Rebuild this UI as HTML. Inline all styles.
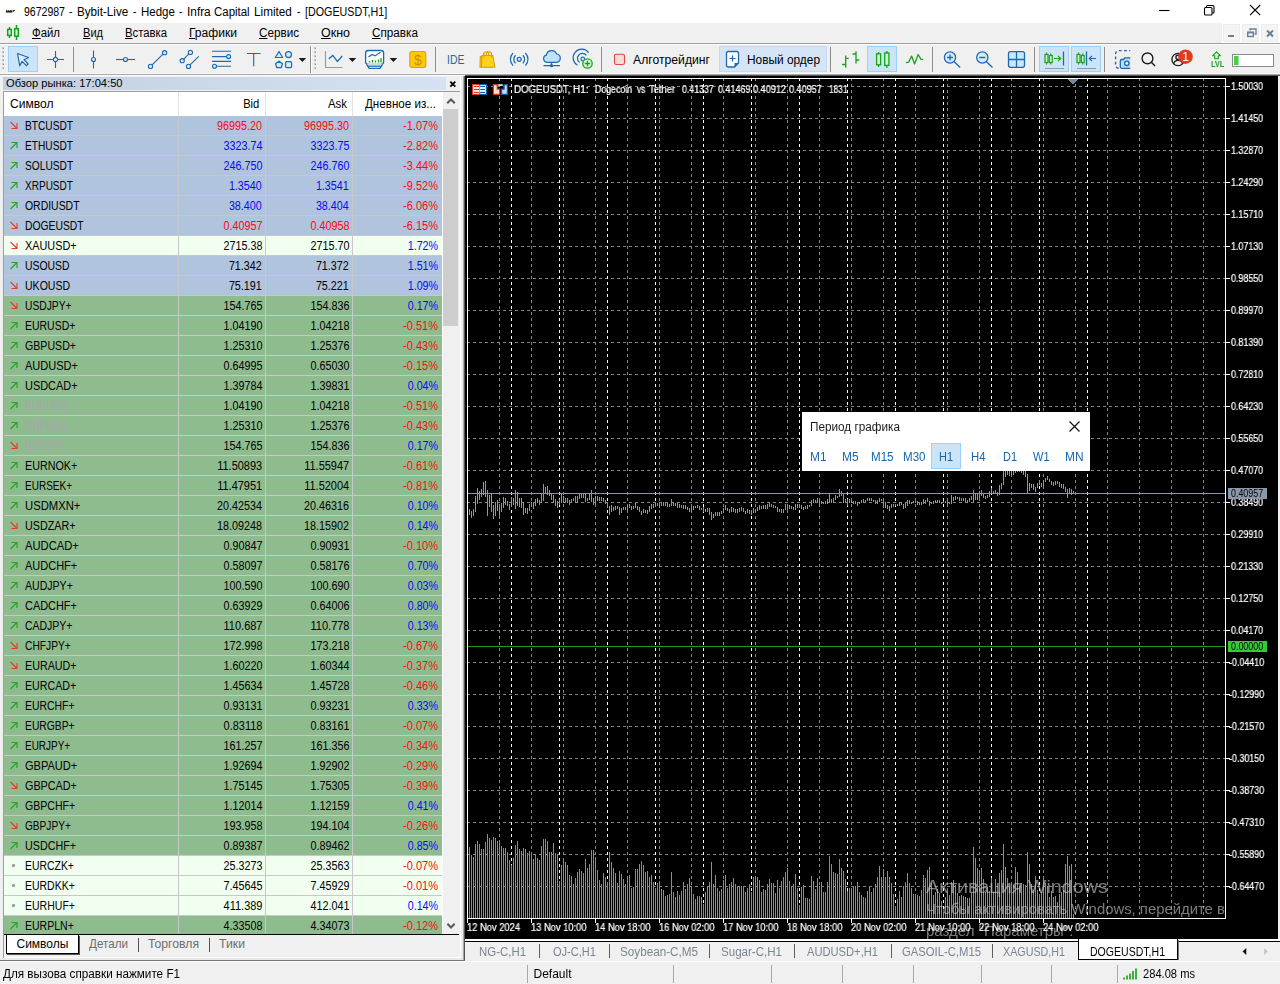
<!DOCTYPE html>
<html lang="ru"><head><meta charset="utf-8"><title>9672987 - Bybit-Live - Hedge - Infra Capital Limited - [DOGEUSDT,H1]</title>
<style>
html,body{margin:0;padding:0;}
body{width:1280px;height:984px;position:relative;overflow:hidden;background:#f0f0f0;font-family:"Liberation Sans",sans-serif;}
.t{position:absolute;white-space:pre;display:block;}
.b{position:absolute;}
svg{position:absolute;overflow:visible;}
u{text-decoration:underline;text-underline-offset:1px;text-decoration-thickness:1px;}
</style></head><body>
<div class="b" style="left:0px;top:0px;width:1280px;height:23px;background:#fff;"></div>
<svg style="left:0;top:0" width="30" height="23"><path d="M6 12.600v-2.300h1.300v1.200l1-1.200h1v1.200l1-1.200h1.600v1.200h.9l.6-1.400h1.400v.9h-1v.7h-1.100l-.5.900z" fill="#111"/><circle cx="12.300" cy="10.300" r=".8" fill="#f7a600"/></svg>
<span class="t" style="left:23.5px;top:4px;font-size:12px;line-height:16px;color:#000;transform-origin:0 50%;transform:scaleX(0.876);">9672987</span>
<span class="t" style="left:68.5px;top:4px;font-size:12px;line-height:16px;color:#000;transform-origin:0 50%;transform:scaleX(0.851);">-</span>
<span class="t" style="left:76.9px;top:4px;font-size:12px;line-height:16px;color:#000;transform-origin:0 50%;transform:scaleX(0.972);">Bybit-Live</span>
<span class="t" style="left:133.1px;top:4px;font-size:12px;line-height:16px;color:#000;transform-origin:0 50%;transform:scaleX(0.851);">-</span>
<span class="t" style="left:140.6px;top:4px;font-size:12px;line-height:16px;color:#000;transform-origin:0 50%;transform:scaleX(0.956);">Hedge</span>
<span class="t" style="left:178.5px;top:4px;font-size:12px;line-height:16px;color:#000;transform-origin:0 50%;transform:scaleX(0.851);">-</span>
<span class="t" style="left:186.9px;top:4px;font-size:12px;line-height:16px;color:#000;transform-origin:0 50%;transform:scaleX(0.987);">Infra</span>
<span class="t" style="left:213.75px;top:4px;font-size:12px;line-height:16px;color:#000;transform-origin:0 50%;transform:scaleX(0.954);">Capital</span>
<span class="t" style="left:254px;top:4px;font-size:12px;line-height:16px;color:#000;transform-origin:0 50%;transform:scaleX(0.980);">Limited</span>
<span class="t" style="left:296.9px;top:4px;font-size:12px;line-height:16px;color:#000;transform-origin:0 50%;transform:scaleX(0.838);">-</span>
<span class="t" style="left:305.2px;top:4px;font-size:12px;line-height:16px;color:#000;transform-origin:0 50%;transform:scaleX(0.893);">[DOGEUSDT,H1]</span>
<svg style="left:0;top:0" width="1280" height="23" fill="none" stroke="#000" stroke-width="1.1"><path d="M1159 10.5h10.5"/><rect x="1204.5" y="7.5" width="7.5" height="7.5" rx="1"/><path d="M1206.5 7.5v-1a1 1 0 0 1 1-1h5.5a1 1 0 0 1 1 1v5.5a1 1 0 0 1-1 1h-1"/><path d="M1250 5l10.2 10.2M1260.2 5l-10.2 10.2"/></svg>
<div class="b" style="left:0px;top:23px;width:1280px;height:20px;background:#f0f0f0;"></div>
<div class="b" style="left:0px;top:43px;width:1280px;height:1px;background:#a0a0a0;"></div>
<div class="b" style="left:0px;top:44px;width:1280px;height:1px;background:#fbfbfb;"></div>
<svg style="left:0;top:23px" width="24" height="20" fill="#e0fae0" stroke="#10a31a" stroke-width="1.500"><path d="M9.500 4v11M16.500 2v15" fill="none"/><rect x="7.700" y="6.400" width="3.600" height="6"/><rect x="14.700" y="5.700" width="3.600" height="7.500"/></svg>
<span class="t" style="left:32px;top:25px;font-size:12px;line-height:16px;color:#000;transform-origin:0 50%;transform:scaleX(0.949);"><u>Ф</u>айл</span>
<span class="t" style="left:83px;top:25px;font-size:12px;line-height:16px;color:#000;transform-origin:0 50%;transform:scaleX(0.921);"><u>В</u>ид</span>
<span class="t" style="left:125px;top:25px;font-size:12px;line-height:16px;color:#000;transform-origin:0 50%;transform:scaleX(0.942);"><u>В</u>ставка</span>
<span class="t" style="left:189px;top:25px;font-size:12px;line-height:16px;color:#000;transform-origin:0 50%;transform:scaleX(1.006);"><u>Г</u>рафики</span>
<span class="t" style="left:259px;top:25px;font-size:12px;line-height:16px;color:#000;transform-origin:0 50%;transform:scaleX(0.973);"><u>С</u>ервис</span>
<span class="t" style="left:321px;top:25px;font-size:12px;line-height:16px;color:#000;transform-origin:0 50%;transform:scaleX(1.040);"><u>О</u>кно</span>
<span class="t" style="left:372px;top:25px;font-size:12px;line-height:16px;color:#000;transform-origin:0 50%;transform:scaleX(0.977);"><u>С</u>правка</span>
<div class="b" style="left:1222px;top:23px;width:58px;height:20px;background:#fff;"></div>
<div class="b" style="left:1223px;top:24px;width:17px;height:18px;background:#f4f4f4;border:1px solid #ececec;box-sizing:border-box;"></div>
<div class="b" style="left:1242px;top:24px;width:17px;height:18px;background:#f4f4f4;border:1px solid #ececec;box-sizing:border-box;"></div>
<div class="b" style="left:1261px;top:24px;width:17px;height:18px;background:#f4f4f4;border:1px solid #ececec;box-sizing:border-box;"></div>
<svg style="left:0;top:0" width="1280" height="44" fill="none" stroke="#6b7f97"><path d="M1228 36h6" stroke-width="2"/><path d="M1250 30.5v-1.5h6v5h-1.5" stroke-width="1.4"/><rect x="1247.7" y="32.2" width="5.6" height="4.3" stroke-width="1.4"/><path d="M1247.7 32.6h5.6" stroke-width="1.6"/><path d="M1267 30.5l6 6M1273 30.5l-6 6" stroke-width="2"/></svg>
<div class="b" style="left:0px;top:45px;width:1280px;height:29px;background:#f0f0f0;"></div>
<div class="b" style="left:0px;top:73px;width:1280px;height:1px;background:#f8f8f8;"></div>
<div class="b" style="left:0px;top:74px;width:1280px;height:1px;background:#a9a9a9;"></div>
<div class="b" style="left:0px;top:75px;width:465px;height:1px;background:#fbfbfb;"></div>
<div class="b" style="left:465px;top:75px;width:815px;height:1px;background:#555;"></div>
<svg style="left:0;top:0" width="1280" height="76"><rect x="2" y="47" width="2" height="2" fill="#c4c4c4"/><rect x="3" y="48" width="1" height="1" fill="#9a9a9a"/><rect x="2" y="51" width="2" height="2" fill="#c4c4c4"/><rect x="3" y="52" width="1" height="1" fill="#9a9a9a"/><rect x="2" y="55" width="2" height="2" fill="#c4c4c4"/><rect x="3" y="56" width="1" height="1" fill="#9a9a9a"/><rect x="2" y="59" width="2" height="2" fill="#c4c4c4"/><rect x="3" y="60" width="1" height="1" fill="#9a9a9a"/><rect x="2" y="63" width="2" height="2" fill="#c4c4c4"/><rect x="3" y="64" width="1" height="1" fill="#9a9a9a"/><rect x="2" y="67" width="2" height="2" fill="#c4c4c4"/><rect x="3" y="68" width="1" height="1" fill="#9a9a9a"/><rect x="314" y="47" width="2" height="2" fill="#c4c4c4"/><rect x="315" y="48" width="1" height="1" fill="#9a9a9a"/><rect x="314" y="51" width="2" height="2" fill="#c4c4c4"/><rect x="315" y="52" width="1" height="1" fill="#9a9a9a"/><rect x="314" y="55" width="2" height="2" fill="#c4c4c4"/><rect x="315" y="56" width="1" height="1" fill="#9a9a9a"/><rect x="314" y="59" width="2" height="2" fill="#c4c4c4"/><rect x="315" y="60" width="1" height="1" fill="#9a9a9a"/><rect x="314" y="63" width="2" height="2" fill="#c4c4c4"/><rect x="315" y="64" width="1" height="1" fill="#9a9a9a"/><rect x="314" y="67" width="2" height="2" fill="#c4c4c4"/><rect x="315" y="68" width="1" height="1" fill="#9a9a9a"/><rect x="8.5" y="46.5" width="29" height="25" fill="#cce4f7" stroke="#99d1ff" stroke-width="1"/><path d="M17.5 53.5l11 4-4.6 2.2 4.2 4.3-1.8 1.7-4.2-4.3-2.3 4.4z" fill="#e3f0fb" stroke="#1b69ae" stroke-width="1.2" stroke-linejoin="round"/><g stroke="#1b69ae" stroke-width="1.1" fill="#f0f0f0"><path d="M55.5 51v17M47 59.5h17"/><circle cx="55.5" cy="59.5" r="2.1"/></g><rect x="73" y="47" width="1" height="25" fill="#8d8d8d"/><g stroke="#1b69ae" stroke-width="1.1" fill="#d9ecfb"><path d="M93.5 50.5v18"/><circle cx="93.5" cy="59.5" r="2"/></g><g stroke="#1b69ae" stroke-width="1.1" fill="#d9ecfb"><path d="M116 59.5h19"/><circle cx="125.5" cy="59.5" r="2"/></g><g stroke="#1b69ae" stroke-width="1.1" fill="#d9ecfb"><path d="M150.5 66.4L164.6 52.7"/><circle cx="150.5" cy="66.4" r="2.1"/><circle cx="164.6" cy="52.7" r="2.1"/></g><g stroke="#1b69ae" stroke-width="1.1" fill="#d9ecfb"><path d="M182.2 60.7L190.4 52.4M188.5 66.4L198.8 56.3"/><circle cx="182.2" cy="60.7" r="2.1"/><circle cx="190.4" cy="52.4" r="2.1"/><circle cx="188.5" cy="66.4" r="2.1"/></g><g stroke="#1b69ae" stroke-width="1.1" fill="#d9ecfb"><path d="M212 51.3h19M212 56.6h16M212 61.4h19M215 66.3h16"/><circle cx="228.6" cy="56.6" r="2"/><circle cx="214.5" cy="66.3" r="2"/></g><path d="M247 53.5h13.5M253.7 53.5v12.7" stroke="#1b69ae" stroke-width="1.15" fill="none"/><g stroke="#1b69ae" stroke-width="1.2" fill="#d9ecfb" stroke-linejoin="round"><path d="M279 51.5l3.7 6h-7.4z"/><circle cx="288.5" cy="54.6" r="3"/><path d="M279 61.2l3.5 2.6-1.3 3.9h-4.4l-1.3-3.9z"/><rect x="285.6" y="61.6" width="6" height="6" rx="1.2"/></g><path d="M298.6 58h7.6l-3.8 4z" fill="#1a1a1a"/><rect x="310" y="46" width="1" height="27" fill="#8d8d8d"/><rect x="311" y="46" width="1" height="27" fill="#fff"/><path d="M325.5 51v16.5h17" stroke="#9a9a9a" stroke-width="1.1" fill="none"/><path d="M328.8 58.8l4-3.4 4.6 6 4.8-5.4" stroke="#1b69ae" stroke-width="1.3" fill="none"/><path d="M348.6 58h7.6l-3.8 4z" fill="#1a1a1a"/><g stroke="#1b69ae" stroke-width="1.3" fill="#fff"><rect x="365.6" y="50.5" width="18" height="13.8" rx="2.5"/><path d="M366.600 64.300l2.600 4h10.800l2.600-4" /><path d="M367.800 66.200h13.600" fill="none"/></g><path d="M368.5 57l3.6-2.6 3 1.5 5.4-3.6" stroke="#1b69ae" stroke-width="1.2" fill="none"/><path d="M369.5 62.5v-1.5M372.5 62.5v-2.5M375.5 62.5v-2M378.5 62.5v-3M381 62.5v-4.5" stroke="#14a31a" stroke-width="1.3"/><path d="M389.6 58h7.6l-3.8 4z" fill="#1a1a1a"/><rect x="409.8" y="51.5" width="16" height="16" rx="2.2" fill="#ffc90a" stroke="#dba207" stroke-width="1.1"/><rect x="435" y="47" width="1" height="25" fill="#8d8d8d"/><g stroke="#dd9f0a" stroke-width="1.1"><path d="M480.300 56.500h10l1.600 10.700h-11.900z" fill="#f6c516"/><path d="M483.500 58.500v-4.200a2.600 2.600 0 0 1 5.200 0v4.200M486.300 55.500v-1.200a2.600 2.600 0 0 1 5.200 0v4.200" fill="none"/><path d="M482 55.500h10.800l2 11.700h-13.300z" fill="#ffd31c"/><path d="M484 58v-3.700a2.400 2.400 0 0 1 .5-1.500M491.500 58v-3.700" fill="none" stroke-width=".9"/></g><g stroke="#1b69ae" stroke-width="1.2" fill="none"><circle cx="519.2" cy="59.3" r="2" fill="#d9ecfb"/><path d="M515.6 55.2a5.6 5.6 0 0 0 0 8.2M522.8 55.2a5.6 5.6 0 0 1 0 8.2M513 53a9 9 0 0 0 0 12.6M525.4 53a9 9 0 0 1 0 12.6"/></g><g stroke="#1b69ae" stroke-width="1.2"><path d="M547 62.3a3.6 3.6 0 0 1-.6-7.1 5.3 5.3 0 0 1 10.2-1.2 4.2 4.2 0 0 1 .2 8.3z" fill="#bfe1fb"/><path d="M543.5 65.7h16.5M551.5 62.5v3" fill="none"/><circle cx="551.5" cy="65.7" r="1" fill="#1b69ae"/></g><g stroke="#1b69ae" stroke-width="1.2" fill="none"><circle cx="582.8" cy="59" r="1.8"/><path d="M586.4 55.3a5 5 0 1 0-6.8 7.2M588.6 52.6a8.6 8.6 0 1 0-11.2 12.6"/></g><circle cx="587.5" cy="63.5" r="4.7" fill="#d8f7d8" stroke="#14a31a" stroke-width="1.3"/><path d="M584.8 63.5h5.4M587.5 60.8v5.4" stroke="#14a31a" stroke-width="1.3"/><rect x="601" y="47" width="1" height="25" fill="#8d8d8d"/><rect x="614.5" y="54.3" width="10" height="10.2" rx="1.8" fill="#fddbd5" stroke="#e0474a" stroke-width="1.1"/><rect x="719.5" y="46.5" width="107" height="25" fill="#d5e5f5" stroke="#c3daf0" stroke-width="1"/><path d="M728.5 51.5h8a2 2 0 0 1 2 2v9.5l-4 4h-6a2 2 0 0 1-2-2v-11.500a2 2 0 0 1 2-2z" fill="#fff" stroke="#1b69ae" stroke-width="1.3"/><path d="M738.5 63l-4 4v-4z" fill="#1b69ae"/><path d="M729.5 58.500h6M732.5 55.500v6" stroke="#1b69ae" stroke-width="1.2"/><rect x="830" y="47" width="1" height="25" fill="#8d8d8d"/><path d="M845.7 55.400v12.400M842 64.500h3.700M845.700 58.300h3M856 51.300v12.200M852.500 54h3.500M856 60h3.200" stroke="#14a31a" stroke-width="1.3" fill="none"/><rect x="867.5" y="46.5" width="29" height="25" fill="#cce4f7" stroke="#99d1ff" stroke-width="1"/><g stroke="#14a31a" stroke-width="1.3" fill="#d3f5d3"><path d="M878.600 52v15M886.800 51v17" fill="none"/><rect x="876.600" y="53.800" width="4" height="11"/><rect x="884.700" y="53" width="4.200" height="12.400"/></g><path d="M906 62.700l2.800-.6 2.800-6 3 7.900 3.500-9.500 2.800 4.700 2.300.4" stroke="#14a31a" stroke-width="1.3" fill="none" stroke-linejoin="round"/><rect x="932" y="47" width="1" height="25" fill="#8d8d8d"/><g stroke="#1b69ae" stroke-width="1.3"><circle cx="950" cy="57.500" r="5.600" fill="#d9ecfb"/><path d="M954.200 61.700l6 5.800M947 57.500h6M950 54.500v6" fill="none"/></g><g stroke="#1b69ae" stroke-width="1.3"><circle cx="982.300" cy="57.500" r="5.600" fill="#d9ecfb"/><path d="M986.500 61.700l6 5.800M979.300 57.500h6" fill="none"/></g><g stroke="#1b69ae" stroke-width="1.3"><rect x="1008.500" y="51.700" width="16" height="15.600" rx="2" fill="#cfe7fb"/><path d="M1016.500 51.700v15.600M1008.500 59.500h16" fill="none"/></g><rect x="1034" y="47" width="1" height="25" fill="#8d8d8d"/><rect x="1039.5" y="46.5" width="29" height="25" fill="#cce4f7" stroke="#99d1ff" stroke-width="1"/><g stroke="#14a31a" stroke-width="1.2" fill="#d3f5d3"><path d="M1046.500 52.500v12" fill="none"/><rect x="1045" y="54.500" width="3" height="8"/><path d="M1050.800 53.500v11" fill="none"/><rect x="1049.400" y="55.500" width="2.800" height="7"/></g><path d="M1054 58.500h6.500M1058 55.800l2.700 2.700-2.700 2.700" stroke="#14a31a" stroke-width="1.2" fill="none"/><path d="M1063.500 51.500v14" stroke="#1b69ae" stroke-width="1.3"/><path d="M1045 68.500h19" stroke="#9a9a9a" stroke-width="1"/><rect x="1071.5" y="46.5" width="29" height="25" fill="#cce4f7" stroke="#99d1ff" stroke-width="1"/><g stroke="#14a31a" stroke-width="1.2" fill="#d3f5d3"><path d="M1078.500 52.500v12" fill="none"/><rect x="1077" y="54.500" width="3" height="8"/><path d="M1082.800 53.500v11" fill="none"/><rect x="1081.400" y="55.500" width="2.800" height="7"/></g><path d="M1086.500 51.500v14" stroke="#1b69ae" stroke-width="1.300"/><path d="M1089.500 58.500h6.500M1092 55.800l-2.700 2.700 2.700 2.700" stroke="#1b69ae" stroke-width="1.200" fill="none"/><path d="M1077 68.500h19" stroke="#9a9a9a" stroke-width="1"/><rect x="1104" y="47" width="1" height="25" fill="#8d8d8d"/><clipPath id="cpS"><rect x="1110" y="46" width="20.300" height="26"/></clipPath><g clip-path="url(#cpS)"><path d="M1132 50.600h-13.200a3.200 3.200 0 0 0-3.200 3.200v11.200a3.200 3.200 0 0 0 3.200 3.200h1" fill="none" stroke="#1b69ae" stroke-width="1.400" stroke-dasharray="2.800 2.400"/><path d="M1134 68.300h-12.200a1.500 1.500 0 0 1-1.500-1.500v-5.800a1.500 1.500 0 0 1 1.500-1.500h1.600l1.400-1.700h9.200z" fill="#b9dcf8" stroke="#1b69ae" stroke-width="1.300"/><circle cx="1126.800" cy="63.300" r="2.200" fill="#e8f4fd" stroke="#1b69ae" stroke-width="1.300"/></g><g stroke="#1a1a1a" stroke-width="1.400" fill="none"><circle cx="1147.500" cy="58.400" r="5.400"/><path d="M1151.300 62.200l3.800 3.800"/></g><g stroke="#1a1a1a" stroke-width="1.300" fill="none"><circle cx="1178.100" cy="59.500" r="6.200"/><circle cx="1178.100" cy="57.300" r="2.200"/><path d="M1173.600 64a4.600 4.600 0 0 1 9 0"/></g><circle cx="1185.500" cy="56.700" r="7.300" fill="#e13c22"/><path d="M1216.500 51.800l4 4h-2.200v3h-3.600v-3h-2.200z" fill="#d3f5d3" stroke="#14a31a" stroke-width="1.100" stroke-linejoin="round"/><rect x="1232.500" y="54.500" width="41" height="12" fill="#fff" stroke="#8a8a8a" stroke-width="1"/><rect x="1234" y="56" width="4.500" height="9" fill="#3fd33f"/></svg>
<span class="t" style="left:414px;top:50.5px;font-size:14px;line-height:18px;color:#c7920a;transform-origin:0 50%;">$</span>
<span class="t" style="left:446.7px;top:52px;font-size:12px;line-height:16px;color:#1b69ae;transform-origin:0 50%;transform:scaleX(0.865);">IDE</span>
<span class="t" style="left:633px;top:52px;font-size:12px;line-height:16px;color:#000;transform-origin:0 50%;transform:scaleX(1.016);">Алготрейдинг</span>
<span class="t" style="left:746.5px;top:52px;font-size:12px;line-height:16px;color:#000;transform-origin:0 50%;transform:scaleX(0.989);">Новый ордер</span>
<span class="t" style="left:1182.2px;top:49.5px;font-size:12px;line-height:15px;color:#fff;transform-origin:0 50%;">1</span>
<span class="t" style="left:1210.7px;top:59px;font-size:9px;line-height:11px;color:#14a31a;transform-origin:0 50%;transform:scaleX(0.815);font-weight:bold;will-change:transform;">LVL</span>
<div class="b" style="left:3px;top:77px;width:443px;height:13px;background:linear-gradient(90deg,#c3cfe1 0%,#ccd9ea 50%,#d4e2f3 100%);"></div>
<span class="t" style="left:5.5px;top:76px;font-size:11px;line-height:15px;color:#000;transform-origin:0 50%;transform:scaleX(1.013);">Обзор рынка: 17:04:50</span>
<svg style="left:446px;top:77px" width="14" height="14"><path d="M4.300 4.700l5 5M9.300 4.700l-5 5" stroke="#000" stroke-width="1.800" fill="none"/></svg>
<div class="b" style="left:3px;top:91px;width:457px;height:1px;background:#9c9c9c;"></div>
<div class="b" style="left:3px;top:91px;width:1px;height:867px;background:#9c9c9c;"></div>
<div class="b" style="left:460px;top:77px;width:1px;height:881px;background:#fdfdfd;"></div>
<div class="b" style="left:461px;top:76px;width:2px;height:884px;background:#ececec;"></div>
<div class="b" style="left:463px;top:76px;width:1px;height:885px;background:#a6a6a6;"></div>
<div class="b" style="left:464px;top:76px;width:1px;height:885px;background:#555555;"></div>
<div class="b" style="left:4px;top:92px;width:438px;height:24px;background:#fff;"></div>
<div class="b" style="left:178px;top:92px;width:1px;height:24px;background:#e5e5e5;"></div>
<div class="b" style="left:265px;top:92px;width:1px;height:24px;background:#e5e5e5;"></div>
<div class="b" style="left:352px;top:92px;width:1px;height:24px;background:#e5e5e5;"></div>
<span class="t" style="left:10.4px;top:96px;font-size:12px;line-height:16px;color:#000;transform-origin:0 50%;transform:scaleX(1.005);">Символ</span>
<span class="t" style="right:1020.3px;top:96px;font-size:12px;line-height:16px;color:#000;transform-origin:100% 50%;transform:scaleX(0.934);">Bid</span>
<span class="t" style="right:933.1px;top:96px;font-size:12px;line-height:16px;color:#000;transform-origin:100% 50%;transform:scaleX(0.950);">Ask</span>
<span class="t" style="left:364.5px;top:96px;font-size:12px;line-height:16px;color:#000;transform-origin:0 50%;transform:scaleX(0.968);">Дневное из...</span>
<div class="b" style="left:442px;top:92px;width:18px;height:842px;background:#f0f0f0;"></div>
<div class="b" style="left:442px;top:92px;width:1px;height:842px;background:#fff;"></div>
<div class="b" style="left:443px;top:109px;width:15px;height:217px;background:#cdcdcd;"></div>
<svg style="left:442px;top:92px" width="18" height="845" fill="none" stroke="#5a5a5a" stroke-width="2.100"><path d="M5.200 11.200l3.800-3.800 3.800 3.800"/><path d="M5.400 831.800l3.600 3.600 3.600-3.600"/></svg>
<div class="b" style="left:4px;top:116px;width:438px;height:818px;overflow:hidden;"><div class="b" style="left:0;top:0px;width:438px;height:19px;background:#b0c4de;border-bottom:1px solid #c8c8c8;"></div><div class="b" style="left:0;top:20px;width:438px;height:19px;background:#b0c4de;border-bottom:1px solid #c8c8c8;"></div><div class="b" style="left:0;top:40px;width:438px;height:19px;background:#b0c4de;border-bottom:1px solid #c8c8c8;"></div><div class="b" style="left:0;top:60px;width:438px;height:19px;background:#b0c4de;border-bottom:1px solid #c8c8c8;"></div><div class="b" style="left:0;top:80px;width:438px;height:19px;background:#b0c4de;border-bottom:1px solid #c8c8c8;"></div><div class="b" style="left:0;top:100px;width:438px;height:19px;background:#b0c4de;border-bottom:1px solid #c8c8c8;"></div><div class="b" style="left:0;top:120px;width:438px;height:19px;background:#f0fff0;border-bottom:1px solid #c8c8c8;"></div><div class="b" style="left:0;top:140px;width:438px;height:19px;background:#b0c4de;border-bottom:1px solid #c8c8c8;"></div><div class="b" style="left:0;top:160px;width:438px;height:19px;background:#b0c4de;border-bottom:1px solid #c8c8c8;"></div><div class="b" style="left:0;top:180px;width:438px;height:19px;background:#8fbc8f;border-bottom:1px solid #c8c8c8;"></div><div class="b" style="left:0;top:200px;width:438px;height:19px;background:#8fbc8f;border-bottom:1px solid #c8c8c8;"></div><div class="b" style="left:0;top:220px;width:438px;height:19px;background:#8fbc8f;border-bottom:1px solid #c8c8c8;"></div><div class="b" style="left:0;top:240px;width:438px;height:19px;background:#8fbc8f;border-bottom:1px solid #c8c8c8;"></div><div class="b" style="left:0;top:260px;width:438px;height:19px;background:#8fbc8f;border-bottom:1px solid #c8c8c8;"></div><div class="b" style="left:0;top:280px;width:438px;height:19px;background:#8fbc8f;border-bottom:1px solid #c8c8c8;"></div><div class="b" style="left:0;top:300px;width:438px;height:19px;background:#8fbc8f;border-bottom:1px solid #c8c8c8;"></div><div class="b" style="left:0;top:320px;width:438px;height:19px;background:#8fbc8f;border-bottom:1px solid #c8c8c8;"></div><div class="b" style="left:0;top:340px;width:438px;height:19px;background:#8fbc8f;border-bottom:1px solid #c8c8c8;"></div><div class="b" style="left:0;top:360px;width:438px;height:19px;background:#8fbc8f;border-bottom:1px solid #c8c8c8;"></div><div class="b" style="left:0;top:380px;width:438px;height:19px;background:#8fbc8f;border-bottom:1px solid #c8c8c8;"></div><div class="b" style="left:0;top:400px;width:438px;height:19px;background:#8fbc8f;border-bottom:1px solid #c8c8c8;"></div><div class="b" style="left:0;top:420px;width:438px;height:19px;background:#8fbc8f;border-bottom:1px solid #c8c8c8;"></div><div class="b" style="left:0;top:440px;width:438px;height:19px;background:#8fbc8f;border-bottom:1px solid #c8c8c8;"></div><div class="b" style="left:0;top:460px;width:438px;height:19px;background:#8fbc8f;border-bottom:1px solid #c8c8c8;"></div><div class="b" style="left:0;top:480px;width:438px;height:19px;background:#8fbc8f;border-bottom:1px solid #c8c8c8;"></div><div class="b" style="left:0;top:500px;width:438px;height:19px;background:#8fbc8f;border-bottom:1px solid #c8c8c8;"></div><div class="b" style="left:0;top:520px;width:438px;height:19px;background:#8fbc8f;border-bottom:1px solid #c8c8c8;"></div><div class="b" style="left:0;top:540px;width:438px;height:19px;background:#8fbc8f;border-bottom:1px solid #c8c8c8;"></div><div class="b" style="left:0;top:560px;width:438px;height:19px;background:#8fbc8f;border-bottom:1px solid #c8c8c8;"></div><div class="b" style="left:0;top:580px;width:438px;height:19px;background:#8fbc8f;border-bottom:1px solid #c8c8c8;"></div><div class="b" style="left:0;top:600px;width:438px;height:19px;background:#8fbc8f;border-bottom:1px solid #c8c8c8;"></div><div class="b" style="left:0;top:620px;width:438px;height:19px;background:#8fbc8f;border-bottom:1px solid #c8c8c8;"></div><div class="b" style="left:0;top:640px;width:438px;height:19px;background:#8fbc8f;border-bottom:1px solid #c8c8c8;"></div><div class="b" style="left:0;top:660px;width:438px;height:19px;background:#8fbc8f;border-bottom:1px solid #c8c8c8;"></div><div class="b" style="left:0;top:680px;width:438px;height:19px;background:#8fbc8f;border-bottom:1px solid #c8c8c8;"></div><div class="b" style="left:0;top:700px;width:438px;height:19px;background:#8fbc8f;border-bottom:1px solid #c8c8c8;"></div><div class="b" style="left:0;top:720px;width:438px;height:19px;background:#8fbc8f;border-bottom:1px solid #c8c8c8;"></div><div class="b" style="left:0;top:740px;width:438px;height:19px;background:#f0fff0;border-bottom:1px solid #c8c8c8;"></div><div class="b" style="left:0;top:760px;width:438px;height:19px;background:#f0fff0;border-bottom:1px solid #c8c8c8;"></div><div class="b" style="left:0;top:780px;width:438px;height:19px;background:#f0fff0;border-bottom:1px solid #c8c8c8;"></div><div class="b" style="left:0;top:800px;width:438px;height:19px;background:#8fbc8f;border-bottom:1px solid #c8c8c8;"></div></div>
<div class="b" style="left:178px;top:116px;width:1px;height:818px;background:#c8c8c8;"></div>
<div class="b" style="left:265px;top:116px;width:1px;height:818px;background:#c8c8c8;"></div>
<div class="b" style="left:352px;top:116px;width:1px;height:818px;background:#c8c8c8;"></div>
<svg style="left:0;top:0" width="30" height="940"><path d="M10.500 122l6 6M11.500 128.5h5.500v-5.500" stroke="#e8392b" stroke-width="1.100" fill="none"/><path d="M10.500 149l6-6M11.500 142.5h5.500v5.500" stroke="#1fa51f" stroke-width="1.100" fill="none"/><path d="M10.500 169l6-6M11.500 162.5h5.500v5.500" stroke="#1fa51f" stroke-width="1.100" fill="none"/><path d="M10.500 189l6-6M11.500 182.5h5.500v5.500" stroke="#1fa51f" stroke-width="1.100" fill="none"/><path d="M10.500 209l6-6M11.500 202.5h5.500v5.500" stroke="#1fa51f" stroke-width="1.100" fill="none"/><path d="M10.500 222l6 6M11.500 228.5h5.500v-5.500" stroke="#e8392b" stroke-width="1.100" fill="none"/><path d="M10.500 242l6 6M11.500 248.5h5.500v-5.500" stroke="#e8392b" stroke-width="1.100" fill="none"/><path d="M10.500 269l6-6M11.500 262.5h5.500v5.500" stroke="#1fa51f" stroke-width="1.100" fill="none"/><path d="M10.500 282l6 6M11.500 288.5h5.500v-5.500" stroke="#e8392b" stroke-width="1.100" fill="none"/><path d="M10.500 302l6 6M11.500 308.5h5.500v-5.500" stroke="#e8392b" stroke-width="1.100" fill="none"/><path d="M10.500 329l6-6M11.500 322.5h5.500v5.500" stroke="#1fa51f" stroke-width="1.100" fill="none"/><path d="M10.500 349l6-6M11.500 342.5h5.500v5.500" stroke="#1fa51f" stroke-width="1.100" fill="none"/><path d="M10.500 369l6-6M11.500 362.5h5.500v5.500" stroke="#1fa51f" stroke-width="1.100" fill="none"/><path d="M10.500 389l6-6M11.500 382.5h5.500v5.500" stroke="#1fa51f" stroke-width="1.100" fill="none"/><path d="M10.500 409l6-6M11.500 402.5h5.500v5.500" stroke="#1fa51f" stroke-width="1.100" fill="none"/><path d="M10.500 429l6-6M11.500 422.5h5.500v5.500" stroke="#1fa51f" stroke-width="1.100" fill="none"/><path d="M10.500 442l6 6M11.500 448.5h5.500v-5.500" stroke="#e8392b" stroke-width="1.100" fill="none"/><path d="M10.500 469l6-6M11.500 462.5h5.500v5.500" stroke="#1fa51f" stroke-width="1.100" fill="none"/><path d="M10.500 489l6-6M11.500 482.5h5.500v5.500" stroke="#1fa51f" stroke-width="1.100" fill="none"/><path d="M10.500 509l6-6M11.500 502.5h5.500v5.500" stroke="#1fa51f" stroke-width="1.100" fill="none"/><path d="M10.500 522l6 6M11.500 528.5h5.500v-5.500" stroke="#e8392b" stroke-width="1.100" fill="none"/><path d="M10.500 549l6-6M11.500 542.5h5.500v5.500" stroke="#1fa51f" stroke-width="1.100" fill="none"/><path d="M10.500 569l6-6M11.500 562.5h5.500v5.500" stroke="#1fa51f" stroke-width="1.100" fill="none"/><path d="M10.500 589l6-6M11.500 582.5h5.500v5.500" stroke="#1fa51f" stroke-width="1.100" fill="none"/><path d="M10.500 609l6-6M11.500 602.5h5.500v5.500" stroke="#1fa51f" stroke-width="1.100" fill="none"/><path d="M10.500 629l6-6M11.500 622.5h5.500v5.500" stroke="#1fa51f" stroke-width="1.100" fill="none"/><path d="M10.500 642l6 6M11.500 648.5h5.500v-5.500" stroke="#e8392b" stroke-width="1.100" fill="none"/><path d="M10.500 662l6 6M11.500 668.5h5.500v-5.500" stroke="#e8392b" stroke-width="1.100" fill="none"/><path d="M10.500 689l6-6M11.500 682.5h5.500v5.500" stroke="#1fa51f" stroke-width="1.100" fill="none"/><path d="M10.500 709l6-6M11.500 702.5h5.500v5.500" stroke="#1fa51f" stroke-width="1.100" fill="none"/><path d="M10.500 729l6-6M11.500 722.5h5.500v5.500" stroke="#1fa51f" stroke-width="1.100" fill="none"/><path d="M10.500 749l6-6M11.500 742.5h5.500v5.500" stroke="#1fa51f" stroke-width="1.100" fill="none"/><path d="M10.500 769l6-6M11.500 762.5h5.500v5.500" stroke="#1fa51f" stroke-width="1.100" fill="none"/><path d="M10.500 782l6 6M11.500 788.5h5.500v-5.500" stroke="#e8392b" stroke-width="1.100" fill="none"/><path d="M10.500 809l6-6M11.500 802.5h5.500v5.500" stroke="#1fa51f" stroke-width="1.100" fill="none"/><path d="M10.500 822l6 6M11.500 828.5h5.500v-5.500" stroke="#e8392b" stroke-width="1.100" fill="none"/><path d="M10.500 849l6-6M11.500 842.5h5.500v5.500" stroke="#1fa51f" stroke-width="1.100" fill="none"/><circle cx="13.500" cy="865.5" r="1.700" fill="#a0a0a0"/><circle cx="13.500" cy="885.5" r="1.700" fill="#a0a0a0"/><circle cx="13.500" cy="905.5" r="1.700" fill="#a0a0a0"/><path d="M10.500 929l6-6M11.500 922.5h5.500v5.500" stroke="#1fa51f" stroke-width="1.100" fill="none"/></svg>
<span class="t" style="left:25px;top:118px;font-size:12px;line-height:16px;color:#000;transform-origin:0 50%;transform:scaleX(0.848);">BTCUSDT</span>
<span class="t" style="right:1018px;top:118px;font-size:12px;line-height:16px;color:#fb0a0f;transform-origin:100% 50%;transform:scaleX(0.899);">96995.20</span>
<span class="t" style="right:931px;top:118px;font-size:12px;line-height:16px;color:#fb0a0f;transform-origin:100% 50%;transform:scaleX(0.899);">96995.30</span>
<span class="t" style="right:842px;top:118px;font-size:12px;line-height:16px;color:#fb0a0f;transform-origin:100% 50%;transform:scaleX(0.921);">-1.07%</span>
<span class="t" style="left:25px;top:138px;font-size:12px;line-height:16px;color:#000;transform-origin:0 50%;transform:scaleX(0.846);">ETHUSDT</span>
<span class="t" style="right:1018px;top:138px;font-size:12px;line-height:16px;color:#0a0af5;transform-origin:100% 50%;transform:scaleX(0.897);">3323.74</span>
<span class="t" style="right:931px;top:138px;font-size:12px;line-height:16px;color:#0a0af5;transform-origin:100% 50%;transform:scaleX(0.897);">3323.75</span>
<span class="t" style="right:842px;top:138px;font-size:12px;line-height:16px;color:#fb0a0f;transform-origin:100% 50%;transform:scaleX(0.921);">-2.82%</span>
<span class="t" style="left:25px;top:158px;font-size:12px;line-height:16px;color:#000;transform-origin:0 50%;transform:scaleX(0.849);">SOLUSDT</span>
<span class="t" style="right:1018px;top:158px;font-size:12px;line-height:16px;color:#0a0af5;transform-origin:100% 50%;transform:scaleX(0.897);">246.750</span>
<span class="t" style="right:931px;top:158px;font-size:12px;line-height:16px;color:#0a0af5;transform-origin:100% 50%;transform:scaleX(0.897);">246.760</span>
<span class="t" style="right:842px;top:158px;font-size:12px;line-height:16px;color:#fb0a0f;transform-origin:100% 50%;transform:scaleX(0.921);">-3.44%</span>
<span class="t" style="left:25px;top:178px;font-size:12px;line-height:16px;color:#000;transform-origin:0 50%;transform:scaleX(0.836);">XRPUSDT</span>
<span class="t" style="right:1018px;top:178px;font-size:12px;line-height:16px;color:#0a0af5;transform-origin:100% 50%;transform:scaleX(0.894);">1.3540</span>
<span class="t" style="right:931px;top:178px;font-size:12px;line-height:16px;color:#0a0af5;transform-origin:100% 50%;transform:scaleX(0.894);">1.3541</span>
<span class="t" style="right:842px;top:178px;font-size:12px;line-height:16px;color:#fb0a0f;transform-origin:100% 50%;transform:scaleX(0.921);">-9.52%</span>
<span class="t" style="left:25px;top:198px;font-size:12px;line-height:16px;color:#000;transform-origin:0 50%;transform:scaleX(0.870);">ORDIUSDT</span>
<span class="t" style="right:1018px;top:198px;font-size:12px;line-height:16px;color:#0a0af5;transform-origin:100% 50%;transform:scaleX(0.894);">38.400</span>
<span class="t" style="right:931px;top:198px;font-size:12px;line-height:16px;color:#0a0af5;transform-origin:100% 50%;transform:scaleX(0.894);">38.404</span>
<span class="t" style="right:842px;top:198px;font-size:12px;line-height:16px;color:#fb0a0f;transform-origin:100% 50%;transform:scaleX(0.921);">-6.06%</span>
<span class="t" style="left:25px;top:218px;font-size:12px;line-height:16px;color:#000;transform-origin:0 50%;transform:scaleX(0.862);">DOGEUSDT</span>
<span class="t" style="right:1018px;top:218px;font-size:12px;line-height:16px;color:#fb0a0f;transform-origin:100% 50%;transform:scaleX(0.897);">0.40957</span>
<span class="t" style="right:931px;top:218px;font-size:12px;line-height:16px;color:#fb0a0f;transform-origin:100% 50%;transform:scaleX(0.897);">0.40958</span>
<span class="t" style="right:842px;top:218px;font-size:12px;line-height:16px;color:#fb0a0f;transform-origin:100% 50%;transform:scaleX(0.921);">-6.15%</span>
<span class="t" style="left:25px;top:238px;font-size:12px;line-height:16px;color:#000;transform-origin:0 50%;transform:scaleX(0.906);">XAUUSD+</span>
<span class="t" style="right:1018px;top:238px;font-size:12px;line-height:16px;color:#000;transform-origin:100% 50%;transform:scaleX(0.897);">2715.38</span>
<span class="t" style="right:931px;top:238px;font-size:12px;line-height:16px;color:#000;transform-origin:100% 50%;transform:scaleX(0.897);">2715.70</span>
<span class="t" style="right:842px;top:238px;font-size:12px;line-height:16px;color:#0a0af5;transform-origin:100% 50%;transform:scaleX(0.891);">1.72%</span>
<span class="t" style="left:25px;top:258px;font-size:12px;line-height:16px;color:#000;transform-origin:0 50%;transform:scaleX(0.867);">USOUSD</span>
<span class="t" style="right:1018px;top:258px;font-size:12px;line-height:16px;color:#000;transform-origin:100% 50%;transform:scaleX(0.894);">71.342</span>
<span class="t" style="right:931px;top:258px;font-size:12px;line-height:16px;color:#000;transform-origin:100% 50%;transform:scaleX(0.894);">71.372</span>
<span class="t" style="right:842px;top:258px;font-size:12px;line-height:16px;color:#0a0af5;transform-origin:100% 50%;transform:scaleX(0.891);">1.51%</span>
<span class="t" style="left:25px;top:278px;font-size:12px;line-height:16px;color:#000;transform-origin:0 50%;transform:scaleX(0.878);">UKOUSD</span>
<span class="t" style="right:1018px;top:278px;font-size:12px;line-height:16px;color:#000;transform-origin:100% 50%;transform:scaleX(0.894);">75.191</span>
<span class="t" style="right:931px;top:278px;font-size:12px;line-height:16px;color:#000;transform-origin:100% 50%;transform:scaleX(0.894);">75.221</span>
<span class="t" style="right:842px;top:278px;font-size:12px;line-height:16px;color:#0a0af5;transform-origin:100% 50%;transform:scaleX(0.891);">1.09%</span>
<span class="t" style="left:25px;top:298px;font-size:12px;line-height:16px;color:#000;transform-origin:0 50%;transform:scaleX(0.857);">USDJPY+</span>
<span class="t" style="right:1018px;top:298px;font-size:12px;line-height:16px;color:#000;transform-origin:100% 50%;transform:scaleX(0.897);">154.765</span>
<span class="t" style="right:931px;top:298px;font-size:12px;line-height:16px;color:#000;transform-origin:100% 50%;transform:scaleX(0.897);">154.836</span>
<span class="t" style="right:842px;top:298px;font-size:12px;line-height:16px;color:#0a0af5;transform-origin:100% 50%;transform:scaleX(0.891);">0.17%</span>
<span class="t" style="left:25px;top:318px;font-size:12px;line-height:16px;color:#000;transform-origin:0 50%;transform:scaleX(0.873);">EURUSD+</span>
<span class="t" style="right:1018px;top:318px;font-size:12px;line-height:16px;color:#000;transform-origin:100% 50%;transform:scaleX(0.897);">1.04190</span>
<span class="t" style="right:931px;top:318px;font-size:12px;line-height:16px;color:#000;transform-origin:100% 50%;transform:scaleX(0.897);">1.04218</span>
<span class="t" style="right:842px;top:318px;font-size:12px;line-height:16px;color:#fb0a0f;transform-origin:100% 50%;transform:scaleX(0.921);">-0.51%</span>
<span class="t" style="left:25px;top:338px;font-size:12px;line-height:16px;color:#000;transform-origin:0 50%;transform:scaleX(0.884);">GBPUSD+</span>
<span class="t" style="right:1018px;top:338px;font-size:12px;line-height:16px;color:#000;transform-origin:100% 50%;transform:scaleX(0.897);">1.25310</span>
<span class="t" style="right:931px;top:338px;font-size:12px;line-height:16px;color:#000;transform-origin:100% 50%;transform:scaleX(0.897);">1.25376</span>
<span class="t" style="right:842px;top:338px;font-size:12px;line-height:16px;color:#fb0a0f;transform-origin:100% 50%;transform:scaleX(0.921);">-0.43%</span>
<span class="t" style="left:25px;top:358px;font-size:12px;line-height:16px;color:#000;transform-origin:0 50%;transform:scaleX(0.919);">AUDUSD+</span>
<span class="t" style="right:1018px;top:358px;font-size:12px;line-height:16px;color:#000;transform-origin:100% 50%;transform:scaleX(0.897);">0.64995</span>
<span class="t" style="right:931px;top:358px;font-size:12px;line-height:16px;color:#000;transform-origin:100% 50%;transform:scaleX(0.897);">0.65030</span>
<span class="t" style="right:842px;top:358px;font-size:12px;line-height:16px;color:#fb0a0f;transform-origin:100% 50%;transform:scaleX(0.921);">-0.15%</span>
<span class="t" style="left:25px;top:378px;font-size:12px;line-height:16px;color:#000;transform-origin:0 50%;transform:scaleX(0.912);">USDCAD+</span>
<span class="t" style="right:1018px;top:378px;font-size:12px;line-height:16px;color:#000;transform-origin:100% 50%;transform:scaleX(0.897);">1.39784</span>
<span class="t" style="right:931px;top:378px;font-size:12px;line-height:16px;color:#000;transform-origin:100% 50%;transform:scaleX(0.897);">1.39831</span>
<span class="t" style="right:842px;top:378px;font-size:12px;line-height:16px;color:#0a0af5;transform-origin:100% 50%;transform:scaleX(0.891);">0.04%</span>
<span class="t" style="left:25px;top:398px;font-size:12px;line-height:16px;color:#a8a4b2;transform-origin:0 50%;transform:scaleX(0.839);">EURUSD</span>
<span class="t" style="right:1018px;top:398px;font-size:12px;line-height:16px;color:#000;transform-origin:100% 50%;transform:scaleX(0.897);">1.04190</span>
<span class="t" style="right:931px;top:398px;font-size:12px;line-height:16px;color:#000;transform-origin:100% 50%;transform:scaleX(0.897);">1.04218</span>
<span class="t" style="right:842px;top:398px;font-size:12px;line-height:16px;color:#fb0a0f;transform-origin:100% 50%;transform:scaleX(0.921);">-0.51%</span>
<span class="t" style="left:25px;top:418px;font-size:12px;line-height:16px;color:#a8a4b2;transform-origin:0 50%;transform:scaleX(0.852);">GBPUSD</span>
<span class="t" style="right:1018px;top:418px;font-size:12px;line-height:16px;color:#000;transform-origin:100% 50%;transform:scaleX(0.897);">1.25310</span>
<span class="t" style="right:931px;top:418px;font-size:12px;line-height:16px;color:#000;transform-origin:100% 50%;transform:scaleX(0.897);">1.25376</span>
<span class="t" style="right:842px;top:418px;font-size:12px;line-height:16px;color:#fb0a0f;transform-origin:100% 50%;transform:scaleX(0.921);">-0.43%</span>
<span class="t" style="left:25px;top:438px;font-size:12px;line-height:16px;color:#a8a4b2;transform-origin:0 50%;transform:scaleX(0.819);">USDJPY</span>
<span class="t" style="right:1018px;top:438px;font-size:12px;line-height:16px;color:#000;transform-origin:100% 50%;transform:scaleX(0.897);">154.765</span>
<span class="t" style="right:931px;top:438px;font-size:12px;line-height:16px;color:#000;transform-origin:100% 50%;transform:scaleX(0.897);">154.836</span>
<span class="t" style="right:842px;top:438px;font-size:12px;line-height:16px;color:#0a0af5;transform-origin:100% 50%;transform:scaleX(0.891);">0.17%</span>
<span class="t" style="left:25px;top:458px;font-size:12px;line-height:16px;color:#000;transform-origin:0 50%;transform:scaleX(0.895);">EURNOK+</span>
<span class="t" style="right:1018px;top:458px;font-size:12px;line-height:16px;color:#000;transform-origin:100% 50%;transform:scaleX(0.915);">11.50893</span>
<span class="t" style="right:931px;top:458px;font-size:12px;line-height:16px;color:#000;transform-origin:100% 50%;transform:scaleX(0.915);">11.55947</span>
<span class="t" style="right:842px;top:458px;font-size:12px;line-height:16px;color:#fb0a0f;transform-origin:100% 50%;transform:scaleX(0.921);">-0.61%</span>
<span class="t" style="left:25px;top:478px;font-size:12px;line-height:16px;color:#000;transform-origin:0 50%;transform:scaleX(0.834);">EURSEK+</span>
<span class="t" style="right:1018px;top:478px;font-size:12px;line-height:16px;color:#000;transform-origin:100% 50%;transform:scaleX(0.915);">11.47951</span>
<span class="t" style="right:931px;top:478px;font-size:12px;line-height:16px;color:#000;transform-origin:100% 50%;transform:scaleX(0.915);">11.52004</span>
<span class="t" style="right:842px;top:478px;font-size:12px;line-height:16px;color:#fb0a0f;transform-origin:100% 50%;transform:scaleX(0.921);">-0.81%</span>
<span class="t" style="left:25px;top:498px;font-size:12px;line-height:16px;color:#000;transform-origin:0 50%;transform:scaleX(0.939);">USDMXN+</span>
<span class="t" style="right:1018px;top:498px;font-size:12px;line-height:16px;color:#000;transform-origin:100% 50%;transform:scaleX(0.899);">20.42534</span>
<span class="t" style="right:931px;top:498px;font-size:12px;line-height:16px;color:#000;transform-origin:100% 50%;transform:scaleX(0.899);">20.46316</span>
<span class="t" style="right:842px;top:498px;font-size:12px;line-height:16px;color:#0a0af5;transform-origin:100% 50%;transform:scaleX(0.891);">0.10%</span>
<span class="t" style="left:25px;top:518px;font-size:12px;line-height:16px;color:#000;transform-origin:0 50%;transform:scaleX(0.897);">USDZAR+</span>
<span class="t" style="right:1018px;top:518px;font-size:12px;line-height:16px;color:#000;transform-origin:100% 50%;transform:scaleX(0.899);">18.09248</span>
<span class="t" style="right:931px;top:518px;font-size:12px;line-height:16px;color:#000;transform-origin:100% 50%;transform:scaleX(0.899);">18.15902</span>
<span class="t" style="right:842px;top:518px;font-size:12px;line-height:16px;color:#0a0af5;transform-origin:100% 50%;transform:scaleX(0.891);">0.14%</span>
<span class="t" style="left:25px;top:538px;font-size:12px;line-height:16px;color:#000;transform-origin:0 50%;transform:scaleX(0.934);">AUDCAD+</span>
<span class="t" style="right:1018px;top:538px;font-size:12px;line-height:16px;color:#000;transform-origin:100% 50%;transform:scaleX(0.897);">0.90847</span>
<span class="t" style="right:931px;top:538px;font-size:12px;line-height:16px;color:#000;transform-origin:100% 50%;transform:scaleX(0.897);">0.90931</span>
<span class="t" style="right:842px;top:538px;font-size:12px;line-height:16px;color:#fb0a0f;transform-origin:100% 50%;transform:scaleX(0.921);">-0.10%</span>
<span class="t" style="left:25px;top:558px;font-size:12px;line-height:16px;color:#000;transform-origin:0 50%;transform:scaleX(0.916);">AUDCHF+</span>
<span class="t" style="right:1018px;top:558px;font-size:12px;line-height:16px;color:#000;transform-origin:100% 50%;transform:scaleX(0.897);">0.58097</span>
<span class="t" style="right:931px;top:558px;font-size:12px;line-height:16px;color:#000;transform-origin:100% 50%;transform:scaleX(0.897);">0.58176</span>
<span class="t" style="right:842px;top:558px;font-size:12px;line-height:16px;color:#0a0af5;transform-origin:100% 50%;transform:scaleX(0.891);">0.70%</span>
<span class="t" style="left:25px;top:578px;font-size:12px;line-height:16px;color:#000;transform-origin:0 50%;transform:scaleX(0.880);">AUDJPY+</span>
<span class="t" style="right:1018px;top:578px;font-size:12px;line-height:16px;color:#000;transform-origin:100% 50%;transform:scaleX(0.897);">100.590</span>
<span class="t" style="right:931px;top:578px;font-size:12px;line-height:16px;color:#000;transform-origin:100% 50%;transform:scaleX(0.897);">100.690</span>
<span class="t" style="right:842px;top:578px;font-size:12px;line-height:16px;color:#0a0af5;transform-origin:100% 50%;transform:scaleX(0.891);">0.03%</span>
<span class="t" style="left:25px;top:598px;font-size:12px;line-height:16px;color:#000;transform-origin:0 50%;transform:scaleX(0.910);">CADCHF+</span>
<span class="t" style="right:1018px;top:598px;font-size:12px;line-height:16px;color:#000;transform-origin:100% 50%;transform:scaleX(0.897);">0.63929</span>
<span class="t" style="right:931px;top:598px;font-size:12px;line-height:16px;color:#000;transform-origin:100% 50%;transform:scaleX(0.897);">0.64006</span>
<span class="t" style="right:842px;top:598px;font-size:12px;line-height:16px;color:#0a0af5;transform-origin:100% 50%;transform:scaleX(0.891);">0.80%</span>
<span class="t" style="left:25px;top:618px;font-size:12px;line-height:16px;color:#000;transform-origin:0 50%;transform:scaleX(0.873);">CADJPY+</span>
<span class="t" style="right:1018px;top:618px;font-size:12px;line-height:16px;color:#000;transform-origin:100% 50%;transform:scaleX(0.916);">110.687</span>
<span class="t" style="right:931px;top:618px;font-size:12px;line-height:16px;color:#000;transform-origin:100% 50%;transform:scaleX(0.916);">110.778</span>
<span class="t" style="right:842px;top:618px;font-size:12px;line-height:16px;color:#0a0af5;transform-origin:100% 50%;transform:scaleX(0.891);">0.13%</span>
<span class="t" style="left:25px;top:638px;font-size:12px;line-height:16px;color:#000;transform-origin:0 50%;transform:scaleX(0.854);">CHFJPY+</span>
<span class="t" style="right:1018px;top:638px;font-size:12px;line-height:16px;color:#000;transform-origin:100% 50%;transform:scaleX(0.897);">172.998</span>
<span class="t" style="right:931px;top:638px;font-size:12px;line-height:16px;color:#000;transform-origin:100% 50%;transform:scaleX(0.897);">173.218</span>
<span class="t" style="right:842px;top:638px;font-size:12px;line-height:16px;color:#fb0a0f;transform-origin:100% 50%;transform:scaleX(0.921);">-0.67%</span>
<span class="t" style="left:25px;top:658px;font-size:12px;line-height:16px;color:#000;transform-origin:0 50%;transform:scaleX(0.894);">EURAUD+</span>
<span class="t" style="right:1018px;top:658px;font-size:12px;line-height:16px;color:#000;transform-origin:100% 50%;transform:scaleX(0.897);">1.60220</span>
<span class="t" style="right:931px;top:658px;font-size:12px;line-height:16px;color:#000;transform-origin:100% 50%;transform:scaleX(0.897);">1.60344</span>
<span class="t" style="right:842px;top:658px;font-size:12px;line-height:16px;color:#fb0a0f;transform-origin:100% 50%;transform:scaleX(0.921);">-0.37%</span>
<span class="t" style="left:25px;top:678px;font-size:12px;line-height:16px;color:#000;transform-origin:0 50%;transform:scaleX(0.887);">EURCAD+</span>
<span class="t" style="right:1018px;top:678px;font-size:12px;line-height:16px;color:#000;transform-origin:100% 50%;transform:scaleX(0.897);">1.45634</span>
<span class="t" style="right:931px;top:678px;font-size:12px;line-height:16px;color:#000;transform-origin:100% 50%;transform:scaleX(0.897);">1.45728</span>
<span class="t" style="right:842px;top:678px;font-size:12px;line-height:16px;color:#fb0a0f;transform-origin:100% 50%;transform:scaleX(0.921);">-0.46%</span>
<span class="t" style="left:25px;top:698px;font-size:12px;line-height:16px;color:#000;transform-origin:0 50%;transform:scaleX(0.869);">EURCHF+</span>
<span class="t" style="right:1018px;top:698px;font-size:12px;line-height:16px;color:#000;transform-origin:100% 50%;transform:scaleX(0.897);">0.93131</span>
<span class="t" style="right:931px;top:698px;font-size:12px;line-height:16px;color:#000;transform-origin:100% 50%;transform:scaleX(0.897);">0.93231</span>
<span class="t" style="right:842px;top:698px;font-size:12px;line-height:16px;color:#0a0af5;transform-origin:100% 50%;transform:scaleX(0.891);">0.33%</span>
<span class="t" style="left:25px;top:718px;font-size:12px;line-height:16px;color:#000;transform-origin:0 50%;transform:scaleX(0.859);">EURGBP+</span>
<span class="t" style="right:1018px;top:718px;font-size:12px;line-height:16px;color:#000;transform-origin:100% 50%;transform:scaleX(0.916);">0.83118</span>
<span class="t" style="right:931px;top:718px;font-size:12px;line-height:16px;color:#000;transform-origin:100% 50%;transform:scaleX(0.897);">0.83161</span>
<span class="t" style="right:842px;top:718px;font-size:12px;line-height:16px;color:#fb0a0f;transform-origin:100% 50%;transform:scaleX(0.921);">-0.07%</span>
<span class="t" style="left:25px;top:738px;font-size:12px;line-height:16px;color:#000;transform-origin:0 50%;transform:scaleX(0.831);">EURJPY+</span>
<span class="t" style="right:1018px;top:738px;font-size:12px;line-height:16px;color:#000;transform-origin:100% 50%;transform:scaleX(0.897);">161.257</span>
<span class="t" style="right:931px;top:738px;font-size:12px;line-height:16px;color:#000;transform-origin:100% 50%;transform:scaleX(0.897);">161.356</span>
<span class="t" style="right:842px;top:738px;font-size:12px;line-height:16px;color:#fb0a0f;transform-origin:100% 50%;transform:scaleX(0.921);">-0.34%</span>
<span class="t" style="left:25px;top:758px;font-size:12px;line-height:16px;color:#000;transform-origin:0 50%;transform:scaleX(0.920);">GBPAUD+</span>
<span class="t" style="right:1018px;top:758px;font-size:12px;line-height:16px;color:#000;transform-origin:100% 50%;transform:scaleX(0.897);">1.92694</span>
<span class="t" style="right:931px;top:758px;font-size:12px;line-height:16px;color:#000;transform-origin:100% 50%;transform:scaleX(0.897);">1.92902</span>
<span class="t" style="right:842px;top:758px;font-size:12px;line-height:16px;color:#fb0a0f;transform-origin:100% 50%;transform:scaleX(0.921);">-0.29%</span>
<span class="t" style="left:25px;top:778px;font-size:12px;line-height:16px;color:#000;transform-origin:0 50%;transform:scaleX(0.899);">GBPCAD+</span>
<span class="t" style="right:1018px;top:778px;font-size:12px;line-height:16px;color:#000;transform-origin:100% 50%;transform:scaleX(0.897);">1.75145</span>
<span class="t" style="right:931px;top:778px;font-size:12px;line-height:16px;color:#000;transform-origin:100% 50%;transform:scaleX(0.897);">1.75305</span>
<span class="t" style="right:842px;top:778px;font-size:12px;line-height:16px;color:#fb0a0f;transform-origin:100% 50%;transform:scaleX(0.921);">-0.39%</span>
<span class="t" style="left:25px;top:798px;font-size:12px;line-height:16px;color:#000;transform-origin:0 50%;transform:scaleX(0.881);">GBPCHF+</span>
<span class="t" style="right:1018px;top:798px;font-size:12px;line-height:16px;color:#000;transform-origin:100% 50%;transform:scaleX(0.897);">1.12014</span>
<span class="t" style="right:931px;top:798px;font-size:12px;line-height:16px;color:#000;transform-origin:100% 50%;transform:scaleX(0.897);">1.12159</span>
<span class="t" style="right:842px;top:798px;font-size:12px;line-height:16px;color:#0a0af5;transform-origin:100% 50%;transform:scaleX(0.891);">0.41%</span>
<span class="t" style="left:25px;top:818px;font-size:12px;line-height:16px;color:#000;transform-origin:0 50%;transform:scaleX(0.843);">GBPJPY+</span>
<span class="t" style="right:1018px;top:818px;font-size:12px;line-height:16px;color:#000;transform-origin:100% 50%;transform:scaleX(0.897);">193.958</span>
<span class="t" style="right:931px;top:818px;font-size:12px;line-height:16px;color:#000;transform-origin:100% 50%;transform:scaleX(0.897);">194.104</span>
<span class="t" style="right:842px;top:818px;font-size:12px;line-height:16px;color:#fb0a0f;transform-origin:100% 50%;transform:scaleX(0.921);">-0.26%</span>
<span class="t" style="left:25px;top:838px;font-size:12px;line-height:16px;color:#000;transform-origin:0 50%;transform:scaleX(0.895);">USDCHF+</span>
<span class="t" style="right:1018px;top:838px;font-size:12px;line-height:16px;color:#000;transform-origin:100% 50%;transform:scaleX(0.897);">0.89387</span>
<span class="t" style="right:931px;top:838px;font-size:12px;line-height:16px;color:#000;transform-origin:100% 50%;transform:scaleX(0.897);">0.89462</span>
<span class="t" style="right:842px;top:838px;font-size:12px;line-height:16px;color:#0a0af5;transform-origin:100% 50%;transform:scaleX(0.891);">0.85%</span>
<span class="t" style="left:25px;top:858px;font-size:12px;line-height:16px;color:#000;transform-origin:0 50%;transform:scaleX(0.869);">EURCZK+</span>
<span class="t" style="right:1018px;top:858px;font-size:12px;line-height:16px;color:#000;transform-origin:100% 50%;transform:scaleX(0.897);">25.3273</span>
<span class="t" style="right:931px;top:858px;font-size:12px;line-height:16px;color:#000;transform-origin:100% 50%;transform:scaleX(0.897);">25.3563</span>
<span class="t" style="right:842px;top:858px;font-size:12px;line-height:16px;color:#fb0a0f;transform-origin:100% 50%;transform:scaleX(0.921);">-0.07%</span>
<span class="t" style="left:25px;top:878px;font-size:12px;line-height:16px;color:#000;transform-origin:0 50%;transform:scaleX(0.873);">EURDKK+</span>
<span class="t" style="right:1018px;top:878px;font-size:12px;line-height:16px;color:#000;transform-origin:100% 50%;transform:scaleX(0.897);">7.45645</span>
<span class="t" style="right:931px;top:878px;font-size:12px;line-height:16px;color:#000;transform-origin:100% 50%;transform:scaleX(0.897);">7.45929</span>
<span class="t" style="right:842px;top:878px;font-size:12px;line-height:16px;color:#fb0a0f;transform-origin:100% 50%;transform:scaleX(0.921);">-0.01%</span>
<span class="t" style="left:25px;top:898px;font-size:12px;line-height:16px;color:#000;transform-origin:0 50%;transform:scaleX(0.876);">EURHUF+</span>
<span class="t" style="right:1018px;top:898px;font-size:12px;line-height:16px;color:#000;transform-origin:100% 50%;transform:scaleX(0.916);">411.389</span>
<span class="t" style="right:931px;top:898px;font-size:12px;line-height:16px;color:#000;transform-origin:100% 50%;transform:scaleX(0.897);">412.041</span>
<span class="t" style="right:842px;top:898px;font-size:12px;line-height:16px;color:#0a0af5;transform-origin:100% 50%;transform:scaleX(0.891);">0.14%</span>
<span class="t" style="left:25px;top:918px;font-size:12px;line-height:16px;color:#000;transform-origin:0 50%;transform:scaleX(0.876);">EURPLN+</span>
<span class="t" style="right:1018px;top:918px;font-size:12px;line-height:16px;color:#000;transform-origin:100% 50%;transform:scaleX(0.897);">4.33508</span>
<span class="t" style="right:931px;top:918px;font-size:12px;line-height:16px;color:#000;transform-origin:100% 50%;transform:scaleX(0.897);">4.34073</span>
<span class="t" style="right:842px;top:918px;font-size:12px;line-height:16px;color:#fb0a0f;transform-origin:100% 50%;transform:scaleX(0.921);">-0.12%</span>
<div class="b" style="left:4px;top:934px;width:455px;height:1px;background:#000;"></div>
<div class="b" style="left:4px;top:935px;width:456px;height:23px;background:#f0f0f0;"></div>
<div class="b" style="left:6px;top:935px;width:73px;height:19px;background:#fff;border:1px solid #000;border-top:none;box-sizing:border-box;box-shadow:1px 1px 0 #555;"></div>
<span class="t" style="left:16.5px;top:936px;font-size:12px;line-height:16px;color:#000;transform-origin:0 50%;">Символы</span>
<span class="t" style="left:89px;top:936px;font-size:12px;line-height:16px;color:#6d6d6d;transform-origin:0 50%;transform:scaleX(0.972);">Детали</span>
<span class="t" style="left:148px;top:936px;font-size:12px;line-height:16px;color:#6d6d6d;transform-origin:0 50%;transform:scaleX(1.018);">Торговля</span>
<span class="t" style="left:219px;top:936px;font-size:12px;line-height:16px;color:#6d6d6d;transform-origin:0 50%;transform:scaleX(1.021);">Тики</span>
<div class="b" style="left:138px;top:938px;width:1px;height:14px;background:#555;"></div>
<div class="b" style="left:209px;top:938px;width:1px;height:14px;background:#555;"></div>
<div class="b" style="left:4px;top:957px;width:457px;height:1px;background:#fdfdfd;"></div>
<div class="b" style="left:0px;top:958px;width:463px;height:2px;background:#e9e9e9;"></div>
<div class="b" style="left:0px;top:960px;width:465px;height:1px;background:#757575;"></div>
<div class="b" style="left:465px;top:76px;width:813px;height:863px;background:#000;"></div>
<div class="b" style="left:1278px;top:76px;width:2px;height:863px;background:#f0f0f0;"></div>
<svg style="left:0;top:0" width="1280" height="984" shape-rendering="crispEdges"><path d="M467 86.5H1225M467 118.5H1225M467 150.5H1225M467 182.5H1225M467 214.5H1225M467 246.5H1225M467 278.5H1225M467 310.5H1225M467 342.5H1225M467 374.5H1225M467 406.5H1225M467 438.5H1225M467 470.5H1225M467 502.5H1225M467 534.5H1225M467 566.5H1225M467 598.5H1225M467 630.5H1225M467 662.5H1225M467 694.5H1225M467 726.5H1225M467 758.5H1225M467 790.5H1225M467 822.5H1225M467 854.5H1225M467 886.5H1225" stroke="#778899" stroke-width="1" stroke-dasharray="3 3" fill="none"/><path d="M499.5 78V918M531.5 78V918M563.5 78V918M595.5 78V918M627.5 78V918M659.5 78V918M691.5 78V918M723.5 78V918M755.5 78V918M787.5 78V918M819.5 78V918M851.5 78V918M883.5 78V918M915.5 78V918M947.5 78V918M979.5 78V918M1011.5 78V918M1043.5 78V918M1075.5 78V918M1107.5 78V918M1139.5 78V918M1171.5 78V918M1203.5 78V918" stroke="#778899" stroke-width="1" stroke-dasharray="3 3" fill="none"/><path d="M511.5 78V918M559.5 78V918M607.5 78V918M655.5 78V918M703.5 78V918M751.5 78V918M799.5 78V918M847.5 78V918M895.5 78V918M943.5 78V918M991.5 78V918M1039.5 78V918M1087.5 78V918" stroke="#fff" stroke-width="1" stroke-dasharray="3 3" fill="none"/><path d="M469.5 847V918M471.5 855V918M473.5 857V918M475.5 844V918M477.5 841V918M479.5 844V918M481.5 849V918M483.5 849V918M485.5 842V918M487.5 834V918M489.5 838V918M491.5 840V918M493.5 837V918M495.5 838V918M497.5 841V918M499.5 841V918M501.5 846V918M503.5 848V918M505.5 848V918M507.5 852V918M509.5 860V918M511.5 865V918M513.5 858V918M515.5 845V918M517.5 841V918M519.5 849V918M521.5 851V918M523.5 848V918M525.5 849V918M527.5 853V918M529.5 851V918M531.5 855V918M533.5 859V918M535.5 854V918M537.5 858V918M539.5 860V918M541.5 846V918M543.5 839V918M545.5 839V918M547.5 841V918M549.5 852V918M551.5 852V918M553.5 843V918M555.5 853V918M557.5 854V918M559.5 881V918M561.5 865V918M563.5 861V918M565.5 862V918M567.5 865V918M569.5 875V918M571.5 876V918M573.5 884V918M575.5 878V918M577.5 872V918M579.5 869V918M581.5 871V918M583.5 873V918M585.5 859V918M587.5 868V918M589.5 864V918M591.5 850V918M593.5 850V918M595.5 857V918M597.5 870V918M599.5 880V918M601.5 884V918M603.5 873V918M605.5 877V918M607.5 882V918M609.5 852V918M611.5 862V918M613.5 868V918M615.5 873V918M617.5 883V918M619.5 871V918M621.5 874V918M623.5 879V918M625.5 884V918M627.5 876V918M629.5 875V918M631.5 888V918M633.5 887V918M635.5 869V918M637.5 869V918M639.5 864V918M641.5 861V918M643.5 865V918M645.5 872V918M647.5 871V918M649.5 877V918M651.5 875V918M653.5 882V918M655.5 888V918M657.5 883V918M659.5 881V918M661.5 889V918M663.5 890V918M665.5 896V918M667.5 895V918M669.5 894V918M671.5 872V918M673.5 892V918M675.5 897V918M677.5 891V918M679.5 895V918M681.5 891V918M683.5 882V918M685.5 889V918M687.5 884V918M689.5 878V918M691.5 886V918M693.5 894V918M695.5 899V918M697.5 896V918M699.5 896V918M701.5 897V918M703.5 904V918M705.5 892V918M707.5 887V918M709.5 882V918M711.5 862V918M713.5 884V918M715.5 875V918M717.5 888V918M719.5 891V918M721.5 889V918M723.5 880V918M725.5 875V918M727.5 888V918M729.5 884V918M731.5 882V918M733.5 878V918M735.5 884V918M737.5 887V918M739.5 886V918M741.5 886V918M743.5 887V918M745.5 892V918M747.5 888V918M749.5 884V918M751.5 892V918M753.5 877V918M755.5 876V918M757.5 877V918M759.5 880V918M761.5 892V918M763.5 889V918M765.5 890V918M767.5 884V918M769.5 879V918M771.5 883V918M773.5 883V918M775.5 893V918M777.5 880V918M779.5 888V918M781.5 881V918M783.5 877V918M785.5 872V918M787.5 868V918M789.5 881V918M791.5 886V918M793.5 884V918M795.5 874V918M797.5 888V918M799.5 905V918M801.5 887V918M803.5 885V918M805.5 898V918M807.5 898V918M809.5 899V918M811.5 876V918M813.5 881V918M815.5 889V918M817.5 878V918M819.5 886V918M821.5 882V918M823.5 892V918M825.5 892V918M827.5 882V918M829.5 856V918M831.5 864V918M833.5 872V918M835.5 873V918M837.5 874V918M839.5 859V918M841.5 868V918M843.5 871V918M845.5 879V918M847.5 891V918M849.5 888V918M851.5 888V918M853.5 887V918M855.5 886V918M857.5 882V918M859.5 892V918M861.5 895V918M863.5 897V918M865.5 898V918M867.5 891V918M869.5 887V918M871.5 892V918M873.5 888V918M875.5 884V918M877.5 877V918M879.5 866V918M881.5 877V918M883.5 869V918M885.5 877V918M887.5 871V918M889.5 877V918M891.5 883V918M893.5 894V918M895.5 906V918M897.5 899V918M899.5 891V918M901.5 897V918M903.5 886V918M905.5 882V918M907.5 873V918M909.5 883V918M911.5 888V918M913.5 894V918M915.5 894V918M917.5 895V918M919.5 896V918M921.5 890V918M923.5 875V918M925.5 878V918M927.5 870V918M929.5 867V918M931.5 883V918M933.5 895V918M935.5 892V918M937.5 889V918M939.5 893V918M941.5 901V918M943.5 912V918M945.5 897V918M947.5 890V918M949.5 895V918M951.5 882V918M953.5 880V918M955.5 885V918M957.5 893V918M959.5 896V918M961.5 895V918M963.5 896V918M965.5 897V918M967.5 898V918M969.5 898V918M971.5 893V918M973.5 847V918M975.5 858V918M977.5 868V918M979.5 870V918M981.5 868V918M983.5 879V918M985.5 892V918M987.5 887V918M989.5 891V918M991.5 878V918M993.5 892V918M995.5 879V918M997.5 892V918M999.5 873V918M1001.5 870V918M1003.5 844V918M1005.5 867V918M1007.5 878V918M1009.5 887V918M1011.5 884V918M1013.5 885V918M1015.5 867V918M1017.5 872V918M1019.5 887V918M1021.5 883V918M1023.5 884V918M1025.5 885V918M1027.5 852V918M1029.5 864V918M1031.5 884V918M1033.5 890V918M1035.5 876V918M1037.5 890V918M1039.5 894V918M1041.5 892V918M1043.5 877V918M1045.5 883V918M1047.5 886V918M1049.5 897V918M1051.5 891V918M1053.5 897V918M1055.5 896V918M1057.5 902V918M1059.5 894V918M1061.5 892V918M1063.5 890V918M1065.5 864V918M1067.5 856V918M1069.5 866V918M1071.5 864V918M1073.5 914V918" stroke="#32cd32" stroke-width="1" fill="none"/><path d="M468 646.500H1225" stroke="#1f9a1f" stroke-width="1"/><path d="M469.5 509V515M471.5 511V518M473.5 509V516M475.5 496V512M477.5 488V504M479.5 491V500M481.5 489V497M483.5 482V495M485.5 481V497M487.5 490V516M489.5 495V507M491.5 494V512M493.5 505V519M495.5 502V516M497.5 500V511M499.5 506V516M501.5 503V512M503.5 497V508M505.5 498V505M507.5 501V506M509.5 504V510M511.5 497V507M513.5 498V505M515.5 490V509M517.5 492V506M519.5 498V507M521.5 498V508M523.5 502V515M525.5 508V513M527.5 508V514M529.5 504V511M531.5 502V507M533.5 503V509M535.5 499V506M537.5 498V503M539.5 500V505M541.5 493V503M543.5 484V501M545.5 487V494M547.5 486V495M549.5 490V496M551.5 494V500M553.5 495V503M555.5 499V506M557.5 501V508M559.5 499V505M561.5 494V503M563.5 496V502M565.5 498V502M567.5 498V503M569.5 500V505M571.5 499V503M573.5 498V501M575.5 496V503M577.5 496V503M579.5 494V499M581.5 493V498M583.5 494V498M585.5 494V502M587.5 498V501M589.5 493V500M591.5 490V502M593.5 498V505M595.5 496V505M597.5 496V501M599.5 497V501M601.5 497V501M603.5 498V502M605.5 500V504M607.5 502V508M609.5 506V515M611.5 505V512M613.5 507V511M615.5 506V510M617.5 506V509M619.5 507V515M621.5 508V513M623.5 507V510M625.5 507V510M627.5 506V512M629.5 504V508M631.5 506V510M633.5 506V509M635.5 503V508M637.5 506V510M639.5 507V512M641.5 511V515M643.5 509V513M645.5 510V513M647.5 510V514M649.5 506V512M651.5 504V509M653.5 504V508M655.5 502V507M657.5 503V506M659.5 503V508M661.5 502V506M663.5 502V506M665.5 503V506M667.5 503V507M669.5 504V507M671.5 499V506M673.5 503V506M675.5 503V506M677.5 503V508M679.5 504V508M681.5 505V508M683.5 505V509M685.5 505V509M687.5 507V510M689.5 508V512M691.5 507V512M693.5 506V510M695.5 506V508M697.5 505V508M699.5 506V510M701.5 508V510M703.5 507V512M705.5 509V512M707.5 508V512M709.5 508V515M711.5 512V520M713.5 514V518M715.5 512V516M717.5 512V516M719.5 512V516M721.5 511V514M723.5 508V513M725.5 505V510M727.5 508V511M729.5 509V513M731.5 507V512M733.5 508V512M735.5 509V513M737.5 509V513M739.5 508V512M741.5 507V511M743.5 508V512M745.5 511V514M747.5 509V513M749.5 510V514M751.5 510V515M753.5 508V513M755.5 509V512M757.5 507V511M759.5 505V510M761.5 506V509M763.5 505V509M765.5 505V509M767.5 504V509M769.5 503V507M771.5 504V507M773.5 505V508M775.5 506V508M777.5 507V512M779.5 509V512M781.5 509V513M783.5 509V513M785.5 504V510M787.5 504V510M789.5 505V509M791.5 506V509M793.5 507V510M795.5 504V510M797.5 504V508M799.5 504V508M801.5 505V509M803.5 507V510M805.5 506V509M807.5 505V509M809.5 505V507M811.5 500V506M813.5 499V503M815.5 500V502M817.5 498V503M819.5 500V506M821.5 501V504M823.5 502V504M825.5 501V504M827.5 499V504M829.5 494V503M831.5 499V503M833.5 498V503M835.5 495V500M837.5 496V498M839.5 489V497M841.5 491V496M843.5 493V503M845.5 499V503M847.5 499V506M849.5 499V503M851.5 500V503M853.5 501V504M855.5 501V504M857.5 502V506M859.5 502V504M861.5 500V503M863.5 499V503M865.5 500V502M867.5 498V501M869.5 498V501M871.5 498V501M873.5 500V502M875.5 500V504M877.5 500V504M879.5 498V502M881.5 499V501M883.5 499V508M885.5 502V508M887.5 505V509M889.5 506V511M891.5 504V508M893.5 504V507M895.5 504V506M897.5 504V506M899.5 502V506M901.5 502V505M903.5 504V509M905.5 503V508M907.5 500V506M909.5 500V504M911.5 502V504M913.5 501V503M915.5 501V503M917.5 501V505M919.5 502V505M921.5 502V505M923.5 499V504M925.5 500V504M927.5 498V502M929.5 501V506M931.5 502V504M933.5 501V504M935.5 500V503M937.5 500V503M939.5 500V503M941.5 502V504M943.5 501V503M945.5 501V503M947.5 500V504M949.5 502V504M951.5 495V504M953.5 497V501M955.5 496V500M957.5 497V499M959.5 497V501M961.5 498V501M963.5 498V501M965.5 498V502M967.5 500V503M969.5 498V502M971.5 496V500M973.5 490V502M975.5 494V500M977.5 494V500M979.5 491V498M981.5 490V496M983.5 493V498M985.5 496V499M987.5 495V498M989.5 491V497M991.5 488V494M993.5 491V494M995.5 490V494M997.5 492V496M999.5 485V495M1001.5 483V489M1003.5 468V485M1005.5 465V477M1007.5 464V475M1009.5 466V476M1011.5 469V477M1013.5 466V475M1015.5 465V473M1017.5 464V472M1019.5 464V472M1021.5 465V473M1023.5 468V475M1025.5 469V477M1027.5 474V494M1029.5 483V491M1031.5 484V488M1033.5 484V490M1035.5 487V492M1037.5 483V488M1039.5 480V485M1041.5 483V487M1043.5 480V487M1045.5 478V482M1047.5 476V480M1049.5 479V482M1051.5 481V485M1053.5 482V486M1055.5 481V485M1057.5 481V484M1059.5 482V487M1061.5 484V488M1063.5 484V489M1065.5 487V492M1067.5 489V498M1069.5 488V493M1071.5 489V495M1073.5 491V494" stroke="#00ff00" stroke-width="1" fill="none"/><path d="M468 493.500H1225" stroke="#8a98ab" stroke-width="1"/><path d="M467.500 78V918.500M467 78.500H1226M1225.500 78V919M467 918.500H1226" stroke="#fff" stroke-width="1" fill="none"/><path d="M1226 86.5h4M1226 118.5h4M1226 150.5h4M1226 182.5h4M1226 214.5h4M1226 246.5h4M1226 278.5h4M1226 310.5h4M1226 342.5h4M1226 374.5h4M1226 406.5h4M1226 438.5h4M1226 470.5h4M1226 502.5h4M1226 534.5h4M1226 566.5h4M1226 598.5h4M1226 630.5h4M1226 662.5h4M1226 694.5h4M1226 726.5h4M1226 758.5h4M1226 790.5h4M1226 822.5h4M1226 854.5h4M1226 886.5h4" stroke="#fff" stroke-width="1"/><path d="M467.5 919v4M531.5 919v4M595.5 919v4M659.5 919v4M723.5 919v4M787.5 919v4M851.5 919v4M915.5 919v4M979.5 919v4M1043.5 919v4" stroke="#fff" stroke-width="1"/><path d="M1068 79h10.500l-5.250 5.500z" fill="#778899"/></svg>
<svg style="left:0;top:0" width="1280" height="984"><rect x="472.600" y="84.600" width="7.200" height="9.800" fill="#fff" stroke="#dd3424" stroke-width="1.200"/><rect x="479.800" y="84.600" width="6.600" height="9.800" fill="#fff" stroke="#0b5ea8" stroke-width="1.200"/><rect x="473.500" y="85.500" width="6" height="8" fill="#ffe6df"/><rect x="479.900" y="85.500" width="5.600" height="8" fill="#d4efff"/><path d="M474 86.500h5M474 89.500h5M474 92.500h5" stroke="#dd3424" stroke-width="1"/><path d="M480.200 86.500h4.800M480.200 89.500h4.800M480.200 92.500h4.800" stroke="#0b5ea8" stroke-width="1"/><path d="M493.400 84.600h3.800v4.500h2.500v5.300h-6.300z" fill="#ffddd2" stroke="#dd3424" stroke-width="1.200"/><path d="M507.400 84.600h-3.300v4.500h-2.500v5.300h5.800z" fill="#b8e0ff" stroke="#0b5ea8" stroke-width="1.200"/><rect x="498.200" y="84.200" width="4.600" height="1.800" fill="#d8d8d8"/></svg>
<span class="t" style="left:1231.3px;top:80.5px;font-size:10px;line-height:12px;color:#fff;transform-origin:0 50%;transform:scaleX(0.890);-webkit-text-stroke:.22px #fff;will-change:transform;">1.50030</span>
<span class="t" style="left:1231.3px;top:112.5px;font-size:10px;line-height:12px;color:#fff;transform-origin:0 50%;transform:scaleX(0.890);-webkit-text-stroke:.22px #fff;will-change:transform;">1.41450</span>
<span class="t" style="left:1231.3px;top:144.5px;font-size:10px;line-height:12px;color:#fff;transform-origin:0 50%;transform:scaleX(0.890);-webkit-text-stroke:.22px #fff;will-change:transform;">1.32870</span>
<span class="t" style="left:1231.3px;top:176.5px;font-size:10px;line-height:12px;color:#fff;transform-origin:0 50%;transform:scaleX(0.890);-webkit-text-stroke:.22px #fff;will-change:transform;">1.24290</span>
<span class="t" style="left:1231.3px;top:208.5px;font-size:10px;line-height:12px;color:#fff;transform-origin:0 50%;transform:scaleX(0.890);-webkit-text-stroke:.22px #fff;will-change:transform;">1.15710</span>
<span class="t" style="left:1231.3px;top:240.5px;font-size:10px;line-height:12px;color:#fff;transform-origin:0 50%;transform:scaleX(0.890);-webkit-text-stroke:.22px #fff;will-change:transform;">1.07130</span>
<span class="t" style="left:1231.3px;top:272.5px;font-size:10px;line-height:12px;color:#fff;transform-origin:0 50%;transform:scaleX(0.890);-webkit-text-stroke:.22px #fff;will-change:transform;">0.98550</span>
<span class="t" style="left:1231.3px;top:304.5px;font-size:10px;line-height:12px;color:#fff;transform-origin:0 50%;transform:scaleX(0.890);-webkit-text-stroke:.22px #fff;will-change:transform;">0.89970</span>
<span class="t" style="left:1231.3px;top:336.5px;font-size:10px;line-height:12px;color:#fff;transform-origin:0 50%;transform:scaleX(0.890);-webkit-text-stroke:.22px #fff;will-change:transform;">0.81390</span>
<span class="t" style="left:1231.3px;top:368.5px;font-size:10px;line-height:12px;color:#fff;transform-origin:0 50%;transform:scaleX(0.890);-webkit-text-stroke:.22px #fff;will-change:transform;">0.72810</span>
<span class="t" style="left:1231.3px;top:400.5px;font-size:10px;line-height:12px;color:#fff;transform-origin:0 50%;transform:scaleX(0.890);-webkit-text-stroke:.22px #fff;will-change:transform;">0.64230</span>
<span class="t" style="left:1231.3px;top:432.5px;font-size:10px;line-height:12px;color:#fff;transform-origin:0 50%;transform:scaleX(0.890);-webkit-text-stroke:.22px #fff;will-change:transform;">0.55650</span>
<span class="t" style="left:1231.3px;top:464.5px;font-size:10px;line-height:12px;color:#fff;transform-origin:0 50%;transform:scaleX(0.890);-webkit-text-stroke:.22px #fff;will-change:transform;">0.47070</span>
<span class="t" style="left:1231.3px;top:496.5px;font-size:10px;line-height:12px;color:#fff;transform-origin:0 50%;transform:scaleX(0.890);-webkit-text-stroke:.22px #fff;will-change:transform;">0.38490</span>
<span class="t" style="left:1231.3px;top:528.5px;font-size:10px;line-height:12px;color:#fff;transform-origin:0 50%;transform:scaleX(0.890);-webkit-text-stroke:.22px #fff;will-change:transform;">0.29910</span>
<span class="t" style="left:1231.3px;top:560.5px;font-size:10px;line-height:12px;color:#fff;transform-origin:0 50%;transform:scaleX(0.890);-webkit-text-stroke:.22px #fff;will-change:transform;">0.21330</span>
<span class="t" style="left:1231.3px;top:592.5px;font-size:10px;line-height:12px;color:#fff;transform-origin:0 50%;transform:scaleX(0.890);-webkit-text-stroke:.22px #fff;will-change:transform;">0.12750</span>
<span class="t" style="left:1231.3px;top:624.5px;font-size:10px;line-height:12px;color:#fff;transform-origin:0 50%;transform:scaleX(0.890);-webkit-text-stroke:.22px #fff;will-change:transform;">0.04170</span>
<span class="t" style="left:1228.8px;top:656.5px;font-size:10px;line-height:12px;color:#fff;transform-origin:0 50%;transform:scaleX(0.890);-webkit-text-stroke:.22px #fff;will-change:transform;">-0.04410</span>
<span class="t" style="left:1228.8px;top:688.5px;font-size:10px;line-height:12px;color:#fff;transform-origin:0 50%;transform:scaleX(0.890);-webkit-text-stroke:.22px #fff;will-change:transform;">-0.12990</span>
<span class="t" style="left:1228.8px;top:720.5px;font-size:10px;line-height:12px;color:#fff;transform-origin:0 50%;transform:scaleX(0.890);-webkit-text-stroke:.22px #fff;will-change:transform;">-0.21570</span>
<span class="t" style="left:1228.8px;top:752.5px;font-size:10px;line-height:12px;color:#fff;transform-origin:0 50%;transform:scaleX(0.890);-webkit-text-stroke:.22px #fff;will-change:transform;">-0.30150</span>
<span class="t" style="left:1228.8px;top:784.5px;font-size:10px;line-height:12px;color:#fff;transform-origin:0 50%;transform:scaleX(0.890);-webkit-text-stroke:.22px #fff;will-change:transform;">-0.38730</span>
<span class="t" style="left:1228.8px;top:816.5px;font-size:10px;line-height:12px;color:#fff;transform-origin:0 50%;transform:scaleX(0.890);-webkit-text-stroke:.22px #fff;will-change:transform;">-0.47310</span>
<span class="t" style="left:1228.8px;top:848.5px;font-size:10px;line-height:12px;color:#fff;transform-origin:0 50%;transform:scaleX(0.890);-webkit-text-stroke:.22px #fff;will-change:transform;">-0.55890</span>
<span class="t" style="left:1228.8px;top:880.5px;font-size:10px;line-height:12px;color:#fff;transform-origin:0 50%;transform:scaleX(0.890);-webkit-text-stroke:.22px #fff;will-change:transform;">-0.64470</span>
<div class="b" style="left:1228px;top:488px;width:39px;height:11px;background:#8a98ab;"></div>
<span class="t" style="left:1231.3px;top:487.5px;font-size:10px;line-height:12px;color:#000;transform-origin:0 50%;transform:scaleX(0.890);">0.40957</span>
<div class="b" style="left:1228px;top:641px;width:39px;height:11px;background:#32cd32;"></div>
<span class="t" style="left:1231.3px;top:640.5px;font-size:10px;line-height:12px;color:#000;transform-origin:0 50%;transform:scaleX(0.890);">0.00000</span>
<span class="t" style="left:513.5px;top:83.8px;font-size:10px;line-height:12px;color:#fff;transform-origin:0 50%;transform:scaleX(0.968);-webkit-text-stroke:.22px #fff;will-change:transform;">DOGEUSDT,</span>
<span class="t" style="left:573.4px;top:83.8px;font-size:10px;line-height:12px;color:#fff;transform-origin:0 50%;-webkit-text-stroke:.22px #fff;will-change:transform;">H1:</span>
<span class="t" style="left:595px;top:83.8px;font-size:10px;line-height:12px;color:#fff;transform-origin:0 50%;transform:scaleX(0.876);-webkit-text-stroke:.22px #fff;will-change:transform;">Dogecoin</span>
<span class="t" style="left:636.7px;top:83.8px;font-size:10px;line-height:12px;color:#fff;transform-origin:0 50%;transform:scaleX(0.830);-webkit-text-stroke:.22px #fff;will-change:transform;">vs</span>
<span class="t" style="left:649px;top:83.8px;font-size:10px;line-height:12px;color:#fff;transform-origin:0 50%;transform:scaleX(0.936);-webkit-text-stroke:.22px #fff;will-change:transform;">Tether</span>
<span class="t" style="left:682px;top:83.8px;font-size:10px;line-height:12px;color:#fff;transform-origin:0 50%;transform:scaleX(0.877);-webkit-text-stroke:.22px #fff;will-change:transform;">0.41337</span>
<span class="t" style="left:717.5px;top:83.8px;font-size:10px;line-height:12px;color:#fff;transform-origin:0 50%;transform:scaleX(0.899);-webkit-text-stroke:.22px #fff;will-change:transform;">0.41469</span>
<span class="t" style="left:753px;top:83.8px;font-size:10px;line-height:12px;color:#fff;transform-origin:0 50%;transform:scaleX(0.913);-webkit-text-stroke:.22px #fff;will-change:transform;">0.40912</span>
<span class="t" style="left:789px;top:83.8px;font-size:10px;line-height:12px;color:#fff;transform-origin:0 50%;transform:scaleX(0.905);-webkit-text-stroke:.22px #fff;will-change:transform;">0.40957</span>
<span class="t" style="left:829px;top:83.8px;font-size:10px;line-height:12px;color:#fff;transform-origin:0 50%;transform:scaleX(0.832);-webkit-text-stroke:.22px #fff;will-change:transform;">1831</span>
<span class="t" style="left:926px;top:875px;font-size:19px;line-height:24px;color:rgba(200,200,200,.62);transform-origin:0 50%;transform:scaleX(1.039);">Активация Windows</span>
<div class="b" style="left:926px;top:896px;width:300px;height:43px;overflow:hidden;">
<span class="t" style="left:0px;top:3px;font-size:15px;line-height:20px;color:rgba(200,200,200,.62);transform-origin:0 50%;transform:scaleX(0.991);">Чтобы активировать Windows, перейдите в</span>
<span class="t" style="left:0px;top:25px;font-size:15px;line-height:20px;color:rgba(200,200,200,.62);transform-origin:0 50%;">раздел "Параметры".</span>
</div>
<span class="t" style="left:466.7px;top:921.5px;font-size:10px;line-height:12px;color:#fff;transform-origin:0 50%;transform:scaleX(0.935);-webkit-text-stroke:.22px #fff;will-change:transform;">12 Nov 2024</span>
<span class="t" style="left:530.7px;top:921.5px;font-size:10px;line-height:12px;color:#fff;transform-origin:0 50%;transform:scaleX(0.933);-webkit-text-stroke:.22px #fff;will-change:transform;">13 Nov 10:00</span>
<span class="t" style="left:594.7px;top:921.5px;font-size:10px;line-height:12px;color:#fff;transform-origin:0 50%;transform:scaleX(0.933);-webkit-text-stroke:.22px #fff;will-change:transform;">14 Nov 18:00</span>
<span class="t" style="left:658.7px;top:921.5px;font-size:10px;line-height:12px;color:#fff;transform-origin:0 50%;transform:scaleX(0.933);-webkit-text-stroke:.22px #fff;will-change:transform;">16 Nov 02:00</span>
<span class="t" style="left:722.7px;top:921.5px;font-size:10px;line-height:12px;color:#fff;transform-origin:0 50%;transform:scaleX(0.933);-webkit-text-stroke:.22px #fff;will-change:transform;">17 Nov 10:00</span>
<span class="t" style="left:786.7px;top:921.5px;font-size:10px;line-height:12px;color:#fff;transform-origin:0 50%;transform:scaleX(0.933);-webkit-text-stroke:.22px #fff;will-change:transform;">18 Nov 18:00</span>
<span class="t" style="left:850.7px;top:921.5px;font-size:10px;line-height:12px;color:#fff;transform-origin:0 50%;transform:scaleX(0.933);-webkit-text-stroke:.22px #fff;will-change:transform;">20 Nov 02:00</span>
<span class="t" style="left:914.7px;top:921.5px;font-size:10px;line-height:12px;color:#fff;transform-origin:0 50%;transform:scaleX(0.933);-webkit-text-stroke:.22px #fff;will-change:transform;">21 Nov 10:00</span>
<span class="t" style="left:978.7px;top:921.5px;font-size:10px;line-height:12px;color:#fff;transform-origin:0 50%;transform:scaleX(0.933);-webkit-text-stroke:.22px #fff;will-change:transform;">22 Nov 18:00</span>
<span class="t" style="left:1042.7px;top:921.5px;font-size:10px;line-height:12px;color:#fff;transform-origin:0 50%;transform:scaleX(0.933);-webkit-text-stroke:.22px #fff;will-change:transform;">24 Nov 02:00</span>
<div class="b" style="left:802px;top:412px;width:288px;height:59px;background:#fff;"></div>
<span class="t" style="left:810px;top:419px;font-size:12px;line-height:16px;color:#1a1a1a;transform-origin:0 50%;transform:scaleX(0.979);">Период графика</span>
<svg style="left:1066px;top:418px" width="18" height="18"><path d="M3.500 3.500l10 10M13.500 3.500l-10 10" stroke="#111" stroke-width="1.200" fill="none"/></svg>
<div class="b" style="left:931px;top:443px;width:30px;height:26px;background:#cce4f7;border:1px solid #99d1ff;box-sizing:border-box;"></div>
<span class="t" style="left:809.5px;top:449px;font-size:12px;line-height:16px;color:#1765a9;transform-origin:0 50%;transform:scaleX(0.990);">M1</span>
<span class="t" style="left:841.5px;top:449px;font-size:12px;line-height:16px;color:#1765a9;transform-origin:0 50%;transform:scaleX(0.990);">M5</span>
<span class="t" style="left:870.5px;top:449px;font-size:12px;line-height:16px;color:#1765a9;transform-origin:0 50%;transform:scaleX(0.964);">M15</span>
<span class="t" style="left:902.5px;top:449px;font-size:12px;line-height:16px;color:#1765a9;transform-origin:0 50%;transform:scaleX(0.964);">M30</span>
<span class="t" style="left:938.5px;top:449px;font-size:12px;line-height:16px;color:#1765a9;transform-origin:0 50%;transform:scaleX(0.913);">H1</span>
<span class="t" style="left:970.5px;top:449px;font-size:12px;line-height:16px;color:#1765a9;transform-origin:0 50%;transform:scaleX(0.945);">H4</span>
<span class="t" style="left:1002.5px;top:449px;font-size:12px;line-height:16px;color:#1765a9;transform-origin:0 50%;transform:scaleX(0.913);">D1</span>
<span class="t" style="left:1033px;top:449px;font-size:12px;line-height:16px;color:#1765a9;transform-origin:0 50%;transform:scaleX(0.917);">W1</span>
<span class="t" style="left:1064.5px;top:449px;font-size:12px;line-height:16px;color:#1765a9;transform-origin:0 50%;transform:scaleX(0.991);">MN</span>
<div class="b" style="left:465px;top:939px;width:815px;height:2px;background:#fff;"></div>
<div class="b" style="left:465px;top:941px;width:815px;height:19px;background:#f0f0f0;"></div>
<div class="b" style="left:465px;top:941px;width:815px;height:1px;background:#000;"></div>
<span class="t" style="left:479.2px;top:944px;font-size:12px;line-height:16px;color:#7b8490;transform-origin:0 50%;transform:scaleX(0.953);">NG-C,H1</span>
<span class="t" style="left:552.5px;top:944px;font-size:12px;line-height:16px;color:#7b8490;transform-origin:0 50%;transform:scaleX(0.921);">OJ-C,H1</span>
<span class="t" style="left:620px;top:944px;font-size:12px;line-height:16px;color:#7b8490;transform-origin:0 50%;transform:scaleX(0.975);">Soybean-C,M5</span>
<span class="t" style="left:721px;top:944px;font-size:12px;line-height:16px;color:#7b8490;transform-origin:0 50%;transform:scaleX(0.963);">Sugar-C,H1</span>
<span class="t" style="left:807px;top:944px;font-size:12px;line-height:16px;color:#7b8490;transform-origin:0 50%;transform:scaleX(0.930);">AUDUSD+,H1</span>
<span class="t" style="left:902px;top:944px;font-size:12px;line-height:16px;color:#7b8490;transform-origin:0 50%;transform:scaleX(0.940);">GASOIL-C,M15</span>
<span class="t" style="left:1003px;top:944px;font-size:12px;line-height:16px;color:#7b8490;transform-origin:0 50%;transform:scaleX(0.894);">XAGUSD,H1</span>
<div class="b" style="left:539px;top:944px;width:1px;height:14px;background:#5e5e5e;"></div>
<div class="b" style="left:609px;top:944px;width:1px;height:14px;background:#5e5e5e;"></div>
<div class="b" style="left:709px;top:944px;width:1px;height:14px;background:#5e5e5e;"></div>
<div class="b" style="left:794px;top:944px;width:1px;height:14px;background:#5e5e5e;"></div>
<div class="b" style="left:891px;top:944px;width:1px;height:14px;background:#5e5e5e;"></div>
<div class="b" style="left:992px;top:944px;width:1px;height:14px;background:#5e5e5e;"></div>
<div class="b" style="left:1078px;top:939px;width:100px;height:21px;background:#fff;border:1px solid #000;border-top:none;box-sizing:border-box;box-shadow:1px 1px 0 #777;"></div>
<span class="t" style="left:1090px;top:944px;font-size:12px;line-height:16px;color:#000;transform-origin:0 50%;transform:scaleX(0.879);">DOGEUSDT,H1</span>
<svg style="left:1230px;top:941px" width="50" height="19"><path d="M16.300 7v7l-3.800-3.500z" fill="#111"/><path d="M34.200 7v7l3.600-3.500z" fill="#c4c4c4"/></svg>
<div class="b" style="left:465px;top:960px;width:815px;height:1px;background:#eeeeee;"></div>
<div class="b" style="left:0px;top:961px;width:1280px;height:1px;background:#fdfdfd;"></div>
<div class="b" style="left:0px;top:962px;width:1280px;height:22px;background:#f0f0f0;"></div>
<span class="t" style="left:3px;top:966px;font-size:12px;line-height:16px;color:#000;transform-origin:0 50%;transform:scaleX(0.976);">Для вызова справки нажмите F1</span>
<span class="t" style="left:533.5px;top:966px;font-size:12px;line-height:16px;color:#000;transform-origin:0 50%;">Default</span>
<div class="b" style="left:527px;top:965px;width:1px;height:18px;background:#a8a8a8;"></div>
<div class="b" style="left:673px;top:965px;width:1px;height:18px;background:#a8a8a8;"></div>
<div class="b" style="left:771px;top:965px;width:1px;height:18px;background:#a8a8a8;"></div>
<div class="b" style="left:842px;top:965px;width:1px;height:18px;background:#a8a8a8;"></div>
<div class="b" style="left:913px;top:965px;width:1px;height:18px;background:#a8a8a8;"></div>
<div class="b" style="left:981px;top:965px;width:1px;height:18px;background:#a8a8a8;"></div>
<div class="b" style="left:1051px;top:965px;width:1px;height:18px;background:#a8a8a8;"></div>
<div class="b" style="left:1117px;top:965px;width:1px;height:18px;background:#a8a8a8;"></div>
<svg style="left:1120px;top:961px" width="20" height="23"><path d="M4 18.500v-2M7 18.500v-4M10 18.500v-6M13 18.500v-8.500M16 18.500v-11" stroke="#1ea51e" stroke-width="1.700"/></svg>
<span class="t" style="left:1143px;top:966px;font-size:12px;line-height:16px;color:#000;transform-origin:0 50%;transform:scaleX(0.928);">284.08 ms</span>
</body></html>
